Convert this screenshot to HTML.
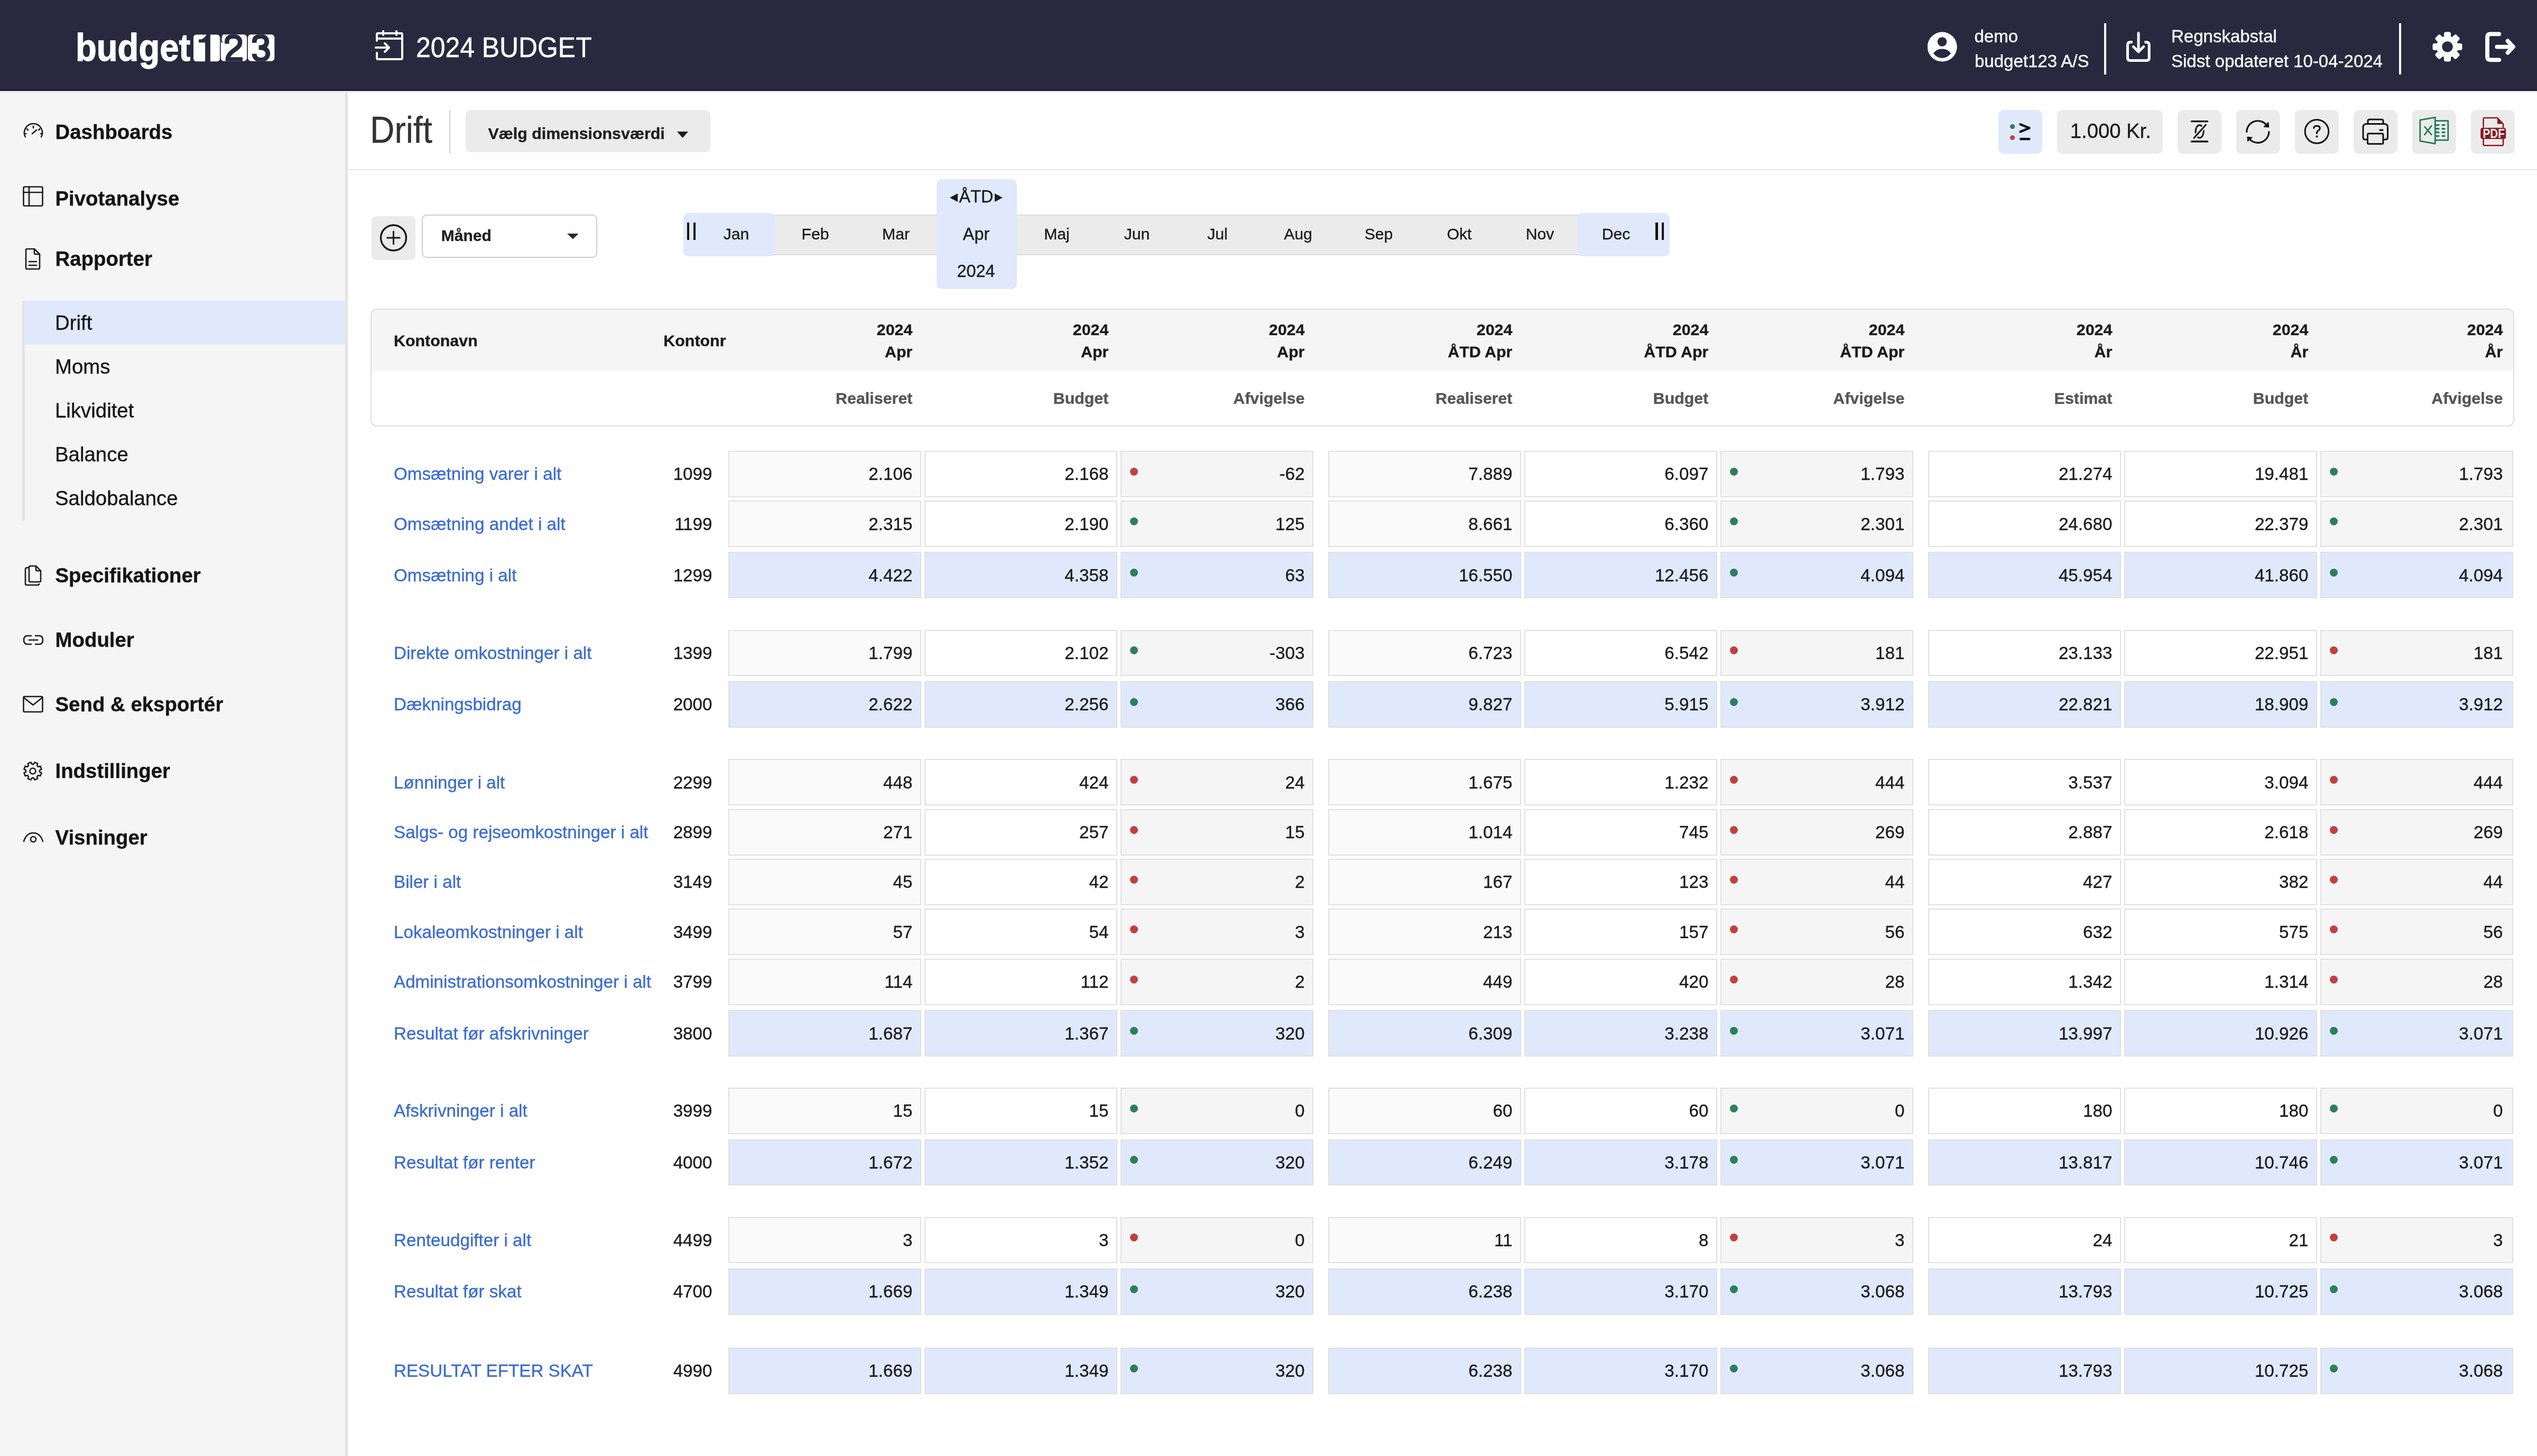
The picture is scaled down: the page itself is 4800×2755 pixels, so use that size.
<!DOCTYPE html>
<html><head><meta charset="utf-8"><title>Drift - budget123</title>
<style>
html,body{margin:0;padding:0;}
body{width:4800px;height:2755px;overflow:hidden;position:relative;background:#fff;font-family:"Liberation Sans", sans-serif;}
.t{position:absolute;white-space:nowrap;-webkit-text-stroke:0.35px currentColor;}
.r{position:absolute;}
</style></head><body><div id="w" style="position:absolute;left:0;top:0;width:4800px;height:2755px;will-change:transform;overflow:hidden">
<div class="r" style="left:0.00px;top:0.00px;width:4800.00px;height:170.00px;background:#2a283e"></div>
<div class="r" style="left:0.00px;top:170.00px;width:4800.00px;height:2.00px;background:#120f2c"></div>
<div class="r" style="left:0.00px;top:172.00px;width:4800.00px;height:3.00px;background:#e8e8e8"></div>
<div class="t" style="left:143.00px;top:53.70px;font-size:72.4px;line-height:72.4px;font-weight:700;color:#ffffff;transform:scaleX(0.9);transform-origin:0 0;-webkit-text-stroke:1.3px #fff">budget</div>
<svg class="r" style="left:365px;top:65px" width="160" height="53" viewBox="0 0 160 53">
<defs><clipPath id="c2"><rect x="52.7" y="0.3" width="49.5" height="50.5" rx="6"/></clipPath>
<clipPath id="c3"><rect x="104" y="0.3" width="50.3" height="50.5" rx="6"/></clipPath></defs>
<path d="M7 0.4 H25.8 Q21 8.5 15 9.4 H11.1 V15.5 H23.1 V51.3 H7 Q1 51.3 1 45.3 V6.4 Q1 0.4 7 0.4 Z" fill="#fff"/>
<path d="M32.9 0.4 H45 Q51 0.4 51 6.4 V45.3 Q51 51.3 45 51.3 H32.9 Z" fill="#fff"/>
<rect x="52.7" y="0.3" width="49.5" height="50.5" rx="6" fill="#fff"/>
<rect x="104" y="0.3" width="50.3" height="50.5" rx="6" fill="#fff"/>
<path clip-path="url(#c2)" d="M64.4 17.7 V13 C64.4 7 69.5 3.7 76.8 3.7 C84 3.7 89.2 8 89.2 15 C89.2 22 84 26 78 30 C71 34.5 65.8 40 65.8 47.5 H94" stroke="#2a283e" stroke-width="8.4" fill="none"/>
<path clip-path="url(#c2)" d="M56 0 Q52 6 55 16" stroke="#2a283e" stroke-width="2" fill="none"/>
<path clip-path="url(#c3)" d="M116.3 16 V13 C116.3 7 121 3.7 128.5 3.7 C135 3.7 139.7 7.5 139.7 14 C139.7 21 134 25 128 25 H124.7 M128 25 C135 25 141.7 29 141.7 36.5 C141.7 44 135.5 48.4 128.7 48.4 C121 48.4 116.1 43.5 116.1 36.7" stroke="#2a283e" stroke-width="8.8" fill="none"/>
</svg>
<svg class="r" style="left:708.00px;top:56.00px;" width="58" height="60" viewBox="0 0 58 60"><g stroke="#fff" stroke-width="4" fill="none" stroke-linecap="round" stroke-linejoin="round">
<path d="M5 21 V9 Q5 7 7 7 H51 Q53 7 53 9 V53 Q53 56 51 56 H7 Q5 56 5 53 V44"/>
<path d="M5 17 H53"/><path d="M17 3 V10"/><path d="M42 3 V10"/>
<path d="M3 34 H28"/><path d="M20 26 L28 34 L20 42"/></g></svg>
<div class="t" style="left:787.00px;top:63.15px;font-size:54.5px;line-height:54.5px;font-weight:400;color:#ffffff;transform:scaleX(0.915);transform-origin:0 0;-webkit-text-stroke:0.5px #fff">2024 BUDGET</div>
<svg class="r" style="left:3647.00px;top:60.00px;" width="57" height="58" viewBox="0 0 57 58"><circle cx="27.7" cy="28.6" r="28" fill="#fff"/>
<circle cx="27.5" cy="19" r="8.8" fill="#2a283e"/>
<path d="M10.8 41 Q17 32.6 27.5 32.6 Q38 32.6 44.2 41 Q37 49.9 27.5 49.9 Q18 49.9 10.8 41 Z" fill="#2a283e"/></svg>
<div class="t" style="left:3735.50px;top:52.06px;font-size:33px;line-height:33px;font-weight:400;color:#fff;">demo</div>
<div class="t" style="left:3736.00px;top:99.06px;font-size:33px;line-height:33px;font-weight:400;color:#fff;">budget123 A/S</div>
<div class="r" style="left:3981.00px;top:44.00px;width:3.50px;height:97.00px;background:#fff"></div>
<svg class="r" style="left:4020.00px;top:58.00px;" width="52" height="62" viewBox="0 0 52 62"><g stroke="#fff" stroke-width="5" fill="none" stroke-linejoin="round">
<path d="M14.8 21.8 H10.4 Q5.4 21.8 5.4 26.8 V51.5 Q5.4 56.5 10.4 56.5 H41.2 Q46.2 56.5 46.2 51.5 V26.8 Q46.2 21.8 41.2 21.8 H37.4"/>
<path d="M26 4.8 V38" stroke-linecap="round"/><path d="M16.3 30.3 L26 40 L35.7 30.3" stroke-linecap="round"/></g></svg>
<div class="t" style="left:4108.00px;top:52.06px;font-size:33px;line-height:33px;font-weight:400;color:#fff;">Regnskabstal</div>
<div class="t" style="left:4108.00px;top:99.06px;font-size:33px;line-height:33px;font-weight:400;color:#fff;">Sidst opdateret 10-04-2024</div>
<div class="r" style="left:4539.00px;top:44.00px;width:3.50px;height:97.00px;background:#fff"></div>
<svg class="r" style="left:4602.00px;top:60.30px;" width="57" height="57" viewBox="0 0 57 57"><circle cx="28.5" cy="28.5" r="20.5" fill="#fff"/><rect x="22" y="0.5" width="13" height="16" rx="3.5" fill="#fff" transform="rotate(0 28.5 28.5)"/><rect x="22" y="0.5" width="13" height="16" rx="3.5" fill="#fff" transform="rotate(45 28.5 28.5)"/><rect x="22" y="0.5" width="13" height="16" rx="3.5" fill="#fff" transform="rotate(90 28.5 28.5)"/><rect x="22" y="0.5" width="13" height="16" rx="3.5" fill="#fff" transform="rotate(135 28.5 28.5)"/><rect x="22" y="0.5" width="13" height="16" rx="3.5" fill="#fff" transform="rotate(180 28.5 28.5)"/><rect x="22" y="0.5" width="13" height="16" rx="3.5" fill="#fff" transform="rotate(225 28.5 28.5)"/><rect x="22" y="0.5" width="13" height="16" rx="3.5" fill="#fff" transform="rotate(270 28.5 28.5)"/><rect x="22" y="0.5" width="13" height="16" rx="3.5" fill="#fff" transform="rotate(315 28.5 28.5)"/><circle cx="28.5" cy="28.5" r="10.3" fill="#2a283e"/></svg>
<svg class="r" style="left:4700.00px;top:59.00px;" width="62" height="62" viewBox="0 0 62 62"><g stroke="#fff" stroke-width="7.8" fill="none" stroke-linecap="round" stroke-linejoin="round">
<path d="M28.3 5.4 H12 Q6 5.4 6 11.4 V48.3 Q6 54.3 12 54.3 H28.3"/><path d="M24.3 29.6 H54"/><path d="M44.5 18.5 L55 29.6 L44.5 40.7"/></g></svg>
<div class="r" style="left:0.00px;top:175.00px;width:653.00px;height:2580.00px;background:#f5f5f5"></div>
<div class="r" style="left:653.00px;top:175.00px;width:5.00px;height:2580.00px;background:#e4e4e4"></div>
<div class="t" style="left:104.50px;top:231.24px;font-size:38.4px;line-height:38.4px;font-weight:700;color:#141414;">Dashboards</div>
<div class="t" style="left:104.50px;top:357.49px;font-size:38.4px;line-height:38.4px;font-weight:700;color:#141414;">Pivotanalyse</div>
<div class="t" style="left:104.50px;top:471.24px;font-size:38.4px;line-height:38.4px;font-weight:700;color:#141414;">Rapporter</div>
<div class="t" style="left:104.50px;top:1069.99px;font-size:38.4px;line-height:38.4px;font-weight:700;color:#141414;">Specifikationer</div>
<div class="t" style="left:104.50px;top:1192.49px;font-size:38.4px;line-height:38.4px;font-weight:700;color:#141414;">Moduler</div>
<div class="t" style="left:104.50px;top:1313.74px;font-size:38.4px;line-height:38.4px;font-weight:700;color:#141414;">Send &amp; eksportér</div>
<div class="t" style="left:104.50px;top:1440.24px;font-size:38.4px;line-height:38.4px;font-weight:700;color:#141414;">Indstillinger</div>
<div class="t" style="left:104.50px;top:1566.49px;font-size:38.4px;line-height:38.4px;font-weight:700;color:#141414;">Visninger</div>
<div class="r" style="left:42.00px;top:569.00px;width:5.00px;height:416.00px;background:#e4e4e4"></div>
<div class="r" style="left:47.00px;top:569.00px;width:606.00px;height:83.00px;background:#dfe9fb"></div>
<div class="t" style="left:104.00px;top:592.19px;font-size:38.4px;line-height:38.4px;font-weight:400;color:#141414;">Drift</div>
<div class="t" style="left:104.00px;top:675.19px;font-size:38.4px;line-height:38.4px;font-weight:400;color:#141414;">Moms</div>
<div class="t" style="left:104.00px;top:758.19px;font-size:38.4px;line-height:38.4px;font-weight:400;color:#141414;">Likviditet</div>
<div class="t" style="left:104.00px;top:841.19px;font-size:38.4px;line-height:38.4px;font-weight:400;color:#141414;">Balance</div>
<div class="t" style="left:104.00px;top:924.19px;font-size:38.4px;line-height:38.4px;font-weight:400;color:#141414;">Saldobalance</div>
<svg class="r" style="left:42.00px;top:229.00px;" width="42" height="33" viewBox="0 0 42 33"><g stroke="#1c1c1c" stroke-width="2.6" fill="none" stroke-linecap="round" stroke-linejoin="round"><path d="M6 30 A17 17 0 1 1 36 30"/>
<path d="M21 13 V10"/><path d="M11 17 L9 15"/><path d="M31 17 L33 15"/><path d="M7 24 H5"/><path d="M35 24 H37"/>
<path d="M19 24 L27 17"/></g></svg>
<svg class="r" style="left:42.00px;top:351.00px;" width="42" height="42" viewBox="0 0 42 42"><g stroke="#1c1c1c" stroke-width="2.6" fill="none" stroke-linecap="round" stroke-linejoin="round"><rect x="2.5" y="2.5" width="36" height="36" rx="2"/><path d="M2.5 13 H38.5"/><path d="M13 2.5 V38.5"/></g></svg>
<svg class="r" style="left:44.00px;top:469.00px;" width="36" height="42" viewBox="0 0 36 42"><g stroke="#1c1c1c" stroke-width="2.6" fill="none" stroke-linecap="round" stroke-linejoin="round"><path d="M5 4 Q5 2 7 2 H21 L31 12 V38 Q31 40 29 40 H7 Q5 40 5 38 Z"/><path d="M21 2 V10 Q21 12 23 12 H31"/><path d="M11 26 H25"/><path d="M11 33 H25"/></g></svg>
<svg class="r" style="left:45.00px;top:1068.00px;" width="36" height="42" viewBox="0 0 36 42"><g stroke="#1c1c1c" stroke-width="2.6" fill="none" stroke-linecap="round" stroke-linejoin="round"><path d="M9 6 H7 Q3 6 3 10 V36 Q3 39 6 39 H26 Q29 39 29 37"/><path d="M10 5 Q10 3 12 3 H23 L32 12 V31 Q32 33 30 33 H12 Q10 33 10 31 Z"/><path d="M23 3 V10 Q23 12 25 12 H32"/></g></svg>
<svg class="r" style="left:42.00px;top:1199.00px;" width="42" height="24" viewBox="0 0 42 24"><g stroke="#1c1c1c" stroke-width="2.6" fill="none" stroke-linecap="round" stroke-linejoin="round"><path d="M17 4 H10 Q3 4 3 12 Q3 20 10 20 H17"/><path d="M25 4 H32 Q39 4 39 12 Q39 20 32 20 H25"/><path d="M13 12 H29"/></g></svg>
<svg class="r" style="left:42.00px;top:1315.00px;" width="42" height="35" viewBox="0 0 42 35"><g stroke="#1c1c1c" stroke-width="2.6" fill="none" stroke-linecap="round" stroke-linejoin="round"><rect x="2.5" y="3" width="36" height="29" rx="2"/><path d="M3 5 L20.5 19 L38 5"/></g></svg>
<svg class="r" style="left:42.00px;top:1439.00px;" width="40" height="40" viewBox="0 0 40 40"><g stroke="#1c1c1c" stroke-width="2.6" fill="none" stroke-linecap="round" stroke-linejoin="round"><path d="M32.92,21.46 L36.62,23.59 L34.29,29.21 L30.17,28.10 L28.10,30.17 L29.21,34.29 L23.59,36.62 L21.46,32.92 L18.54,32.92 L16.41,36.62 L10.79,34.29 L11.90,30.17 L9.83,28.10 L5.71,29.21 L3.38,23.59 L7.08,21.46 L7.08,18.54 L3.38,16.41 L5.71,10.79 L9.83,11.90 L11.90,9.83 L10.79,5.71 L16.41,3.38 L18.54,7.08 L21.46,7.08 L23.59,3.38 L29.21,5.71 L28.10,9.83 L30.17,11.90 L34.29,10.79 L36.62,16.41 L32.92,18.54 Z"/><circle cx="20" cy="20" r="5.5"/></g></svg>
<svg class="r" style="left:42.00px;top:1570.00px;" width="42" height="28" viewBox="0 0 42 28"><g stroke="#1c1c1c" stroke-width="2.6" fill="none" stroke-linecap="round" stroke-linejoin="round"><path d="M3 22 Q8 6 21 6 Q34 6 39 22"/><circle cx="21" cy="18" r="5"/></g></svg>
<div class="t" style="left:700.00px;top:210.38px;font-size:71px;line-height:71px;font-weight:400;color:#333;transform:scaleX(0.905);transform-origin:0 0">Drift</div>
<div class="r" style="left:850.00px;top:208.00px;width:2.40px;height:82.00px;background:#cfcfcf"></div>
<div class="r" style="left:881.00px;top:208.00px;width:463.00px;height:80.00px;background:#ebebeb;border-radius:10px"></div>
<div class="t" style="left:923.40px;top:237.36px;font-size:30.4px;line-height:30.4px;font-weight:700;color:#1f1f1f;">Vælg dimensionsværdi</div>
<svg class="r" style="left:1281.00px;top:249.00px;" width="21" height="12" viewBox="0 0 21 12"><path d="M0 0 H21 L10.5 12 Z" fill="#1f1f1f"/></svg>
<div class="r" style="left:658.00px;top:319.50px;width:4142.00px;height:2.40px;background:#e6e6e6"></div>
<div class="r" style="left:3781.00px;top:208.25px;width:83.00px;height:83.00px;background:#dfe9fb;border-radius:10px"></div>
<div class="r" style="left:4119.50px;top:208.25px;width:83.00px;height:83.00px;background:#ebebeb;border-radius:10px"></div>
<div class="r" style="left:4231.00px;top:208.25px;width:83.00px;height:83.00px;background:#ebebeb;border-radius:10px"></div>
<div class="r" style="left:4342.00px;top:208.25px;width:83.00px;height:83.00px;background:#ebebeb;border-radius:10px"></div>
<div class="r" style="left:4453.00px;top:208.25px;width:83.00px;height:83.00px;background:#ebebeb;border-radius:10px"></div>
<div class="r" style="left:4564.00px;top:208.25px;width:83.00px;height:83.00px;background:#ebebeb;border-radius:10px"></div>
<div class="r" style="left:4675.25px;top:208.25px;width:83.00px;height:83.00px;background:#ebebeb;border-radius:10px"></div>
<div class="r" style="left:3892.00px;top:208.25px;width:200.00px;height:83.00px;background:#ebebeb;border-radius:10px"></div>
<div class="t" style="left:3916.75px;top:229.36px;font-size:38.25px;line-height:38.25px;font-weight:400;color:#1a1a1a;">1.000 Kr.</div>
<svg class="r" style="left:3781.00px;top:208.25px;" width="83" height="83" viewBox="0 0 83 83"><circle cx="26.5" cy="31.5" r="4.6" fill="#2e7d5b"/><circle cx="26.5" cy="52.5" r="4.6" fill="#c0403f"/>
<path d="M41.5 27.3 L58.5 34.2 L41.5 41.3" stroke="#111" stroke-width="4.3" fill="none" stroke-linejoin="round" stroke-linecap="round"/>
<path d="M42 55 H58.5" stroke="#111" stroke-width="4.3" stroke-linecap="round"/></svg>
<svg class="r" style="left:4119.50px;top:208.25px;" width="83" height="83" viewBox="0 0 83 83"><g fill="none" stroke-linecap="round">
<path d="M26.5 21.6 H56.5 M26.5 59.7 H56.5" stroke="#111" stroke-width="3.4"/>
<ellipse cx="41.6" cy="40.8" rx="7.6" ry="12" stroke="#111" stroke-width="3"/>
<path d="M31.1 53.1 L53.4 28.2" stroke="#ebebeb" stroke-width="7"/>
<path d="M31.1 53.1 L53.4 28.2" stroke="#111" stroke-width="3"/></g></svg>
<svg class="r" style="left:4231.00px;top:208.25px;" width="83" height="83" viewBox="0 0 83 83"><g stroke="#111" stroke-width="3.2" fill="none" stroke-linecap="round">
<path d="M19.7 41.5 A21.1 21.1 0 0 1 56.5 27.8"/><path d="M61.9 41.5 A21.1 21.1 0 0 1 25.5 55.5"/></g>
<path d="M52.3 31.8 L61.6 32.6 L60.7 23.5 Z" fill="#111" stroke="#111" stroke-width="1.2" stroke-linejoin="round"/>
<path d="M30.2 52 L21 51.2 L21.6 59.3 Z" fill="#111" stroke="#111" stroke-width="1.2" stroke-linejoin="round"/></svg>
<svg class="r" style="left:4342.00px;top:208.25px;" width="83" height="83" viewBox="0 0 83 83"><circle cx="41.4" cy="40.8" r="22.3" stroke="#111" stroke-width="3" fill="none"/>
<path d="M35.8 34.2 Q36.3 30.2 41.5 30.2 Q47.2 30.2 47.2 34.6 Q47.2 37.6 43.6 39.6 Q41.4 41 41.4 44.3" stroke="#111" stroke-width="3.1" fill="none" stroke-linecap="round"/>
<circle cx="41.4" cy="50.3" r="2.1" fill="#111"/></svg>
<svg class="r" style="left:4453.00px;top:208.25px;" width="83" height="83" viewBox="0 0 83 83"><g stroke="#111" stroke-width="3" fill="none" stroke-linejoin="round">
<path d="M27 26.5 V21 Q27 18 30 18 H53 Q56 18 56 21 V26.5"/>
<path d="M26.5 55.9 H22 Q18 55.9 18 51.9 V33 Q18 26.5 24.5 26.5 H58 Q64.5 26.5 64.5 33 V51.9 Q64.5 55.9 60.5 55.9 H56"/>
<rect x="26.5" y="44.7" width="29.4" height="19.5" rx="2"/>
<path d="M50 38.1 H55" stroke-width="3.2" stroke-linecap="round"/></g></svg>
<svg class="r" style="left:4564.25px;top:208.25px;" width="83" height="83" viewBox="0 0 83 83"><g stroke="#1f7a56" stroke-width="2.8" fill="none" stroke-linejoin="round" stroke-linecap="round">
<path d="M14.8 19.1 L43.3 14.1 V63.8 L14.8 58.8 Z"/><path d="M43.3 20.7 H67.8 V57.1 H43.3"/>
<path d="M23.5 31.9 L36.3 46.8 M36.3 30.2 L23.5 46.8"/>
<path d="M45.5 28.6 H50 M57 28.6 H61 M45.5 35.6 H50 M57 35.6 H61 M45.5 42.4 H50 M57 42.4 H61 M45.5 49.3 H50 M57 49.3 H61" stroke-width="3.3"/></g></svg>
<svg class="r" style="left:4679.60px;top:208.25px;" width="83" height="83" viewBox="0 0 83 83"><path d="M18.6 33.8 V17 Q18.6 14.9 20.7 14.9 H44.9 L56 26.5 V33.8 M18.6 54.9 V65.2 Q18.6 67.3 20.7 67.3 H54 Q56 67.3 56 65.2 V54.9" stroke="#8a1a26" stroke-width="2.5" fill="none" stroke-linejoin="round"/>
<path d="M44.9 14.2 L56.7 26.5 H44.9 Z" fill="#8a1a26"/>
<rect x="13.2" y="33.8" width="48" height="21.1" rx="4" fill="#8a1a26"/>
<text x="17.4" y="52.8" font-family="Liberation Sans" font-weight="700" font-size="23.5" fill="#f4f4f4" textLength="41.4" lengthAdjust="spacingAndGlyphs">PDF</text></svg>
<div class="r" style="left:703.00px;top:408.50px;width:83.00px;height:83.00px;background:#ebebeb;border-radius:9px"></div>
<svg class="r" style="left:703.00px;top:408.50px;" width="83" height="83" viewBox="0 0 83 83"><circle cx="41.5" cy="41" r="24" stroke="#1a1a1a" stroke-width="3.4" fill="none"/>
<path d="M41.5 28 V54 M28.5 41 H54.5" stroke="#1a1a1a" stroke-width="3"/></svg>
<div class="r" style="left:798.00px;top:406.00px;width:332.00px;height:82.00px;background:#fff;border:2.4px solid #cdcdcd;border-radius:9px;box-sizing:border-box"></div>
<div class="t" style="left:834.80px;top:431.00px;font-size:30px;line-height:30px;font-weight:700;color:#1f1f1f;">Måned</div>
<svg class="r" style="left:1072.50px;top:441.60px;" width="21.7" height="10.5" viewBox="0 0 21.7 10.5"><path d="M0 0 H21.7 L10.85 10.5 Z" fill="#2a2a2a"/></svg>
<div class="r" style="left:1320.00px;top:406.00px;width:1820.00px;height:76.50px;background:#ebebeb;border-top:2px solid #dcdcdc;border-bottom:2px solid #dcdcdc;box-sizing:border-box"></div>
<div class="r" style="left:1292.50px;top:403.00px;width:174.00px;height:82.00px;background:#dfe9fb;border-radius:10px"></div>
<div class="r" style="left:2984.00px;top:403.00px;width:174.50px;height:82.00px;background:#dfe9fb;border-radius:10px"></div>
<div class="r" style="left:1771.50px;top:339.00px;width:152.00px;height:207.50px;background:#dfe9fb;border-radius:10px"></div>
<div class="r" style="left:1300.10px;top:421.10px;width:4.20px;height:32.80px;background:#111"></div>
<div class="r" style="left:1311.80px;top:421.10px;width:4.40px;height:32.80px;background:#111"></div>
<div class="r" style="left:3132.20px;top:421.10px;width:4.40px;height:32.80px;background:#111"></div>
<div class="r" style="left:3144.00px;top:421.10px;width:4.40px;height:32.80px;background:#111"></div>
<div class="t" style="left:393.00px;width:2000px;text-align:center;top:428.43px;font-size:30.2px;line-height:30.2px;font-weight:400;color:#1a1a1a;">Jan</div>
<div class="t" style="left:542.50px;width:2000px;text-align:center;top:428.43px;font-size:30.2px;line-height:30.2px;font-weight:400;color:#1a1a1a;">Feb</div>
<div class="t" style="left:695.00px;width:2000px;text-align:center;top:428.43px;font-size:30.2px;line-height:30.2px;font-weight:400;color:#1a1a1a;">Mar</div>
<div class="t" style="left:847.00px;width:2000px;text-align:center;top:426.57px;font-size:32.4px;line-height:32.4px;font-weight:400;color:#1a1a1a;">Apr</div>
<div class="t" style="left:999.50px;width:2000px;text-align:center;top:428.43px;font-size:30.2px;line-height:30.2px;font-weight:400;color:#1a1a1a;">Maj</div>
<div class="t" style="left:1151.00px;width:2000px;text-align:center;top:428.43px;font-size:30.2px;line-height:30.2px;font-weight:400;color:#1a1a1a;">Jun</div>
<div class="t" style="left:1303.50px;width:2000px;text-align:center;top:428.43px;font-size:30.2px;line-height:30.2px;font-weight:400;color:#1a1a1a;">Jul</div>
<div class="t" style="left:1456.00px;width:2000px;text-align:center;top:428.43px;font-size:30.2px;line-height:30.2px;font-weight:400;color:#1a1a1a;">Aug</div>
<div class="t" style="left:1608.50px;width:2000px;text-align:center;top:428.43px;font-size:30.2px;line-height:30.2px;font-weight:400;color:#1a1a1a;">Sep</div>
<div class="t" style="left:1761.00px;width:2000px;text-align:center;top:428.43px;font-size:30.2px;line-height:30.2px;font-weight:400;color:#1a1a1a;">Okt</div>
<div class="t" style="left:1913.50px;width:2000px;text-align:center;top:428.43px;font-size:30.2px;line-height:30.2px;font-weight:400;color:#1a1a1a;">Nov</div>
<div class="t" style="left:2057.50px;width:2000px;text-align:center;top:428.43px;font-size:30.2px;line-height:30.2px;font-weight:400;color:#1a1a1a;">Dec</div>
<div class="t" style="left:847.00px;width:2000px;text-align:center;top:356.27px;font-size:32.4px;line-height:32.4px;font-weight:400;color:#1a1a1a;">ÅTD</div>
<svg class="r" style="left:1797.00px;top:365.50px;" width="15" height="16" viewBox="0 0 15 16"><path d="M0 8 L15 0 V16 Z" fill="#1a1a1a"/></svg>
<svg class="r" style="left:1882.00px;top:365.50px;" width="15" height="16" viewBox="0 0 15 16"><path d="M15 8 L0 0 V16 Z" fill="#1a1a1a"/></svg>
<div class="t" style="left:846.50px;width:2000px;text-align:center;top:496.87px;font-size:32.4px;line-height:32.4px;font-weight:400;color:#1a1a1a;">2024</div>
<div class="r" style="left:701.00px;top:584.00px;width:4056.00px;height:222.50px;background:#fff;border:2.4px solid #dedede;border-radius:12px;box-sizing:border-box"></div>
<div class="r" style="left:703.40px;top:586.40px;width:4051.20px;height:116.00px;background:#f5f5f5;border-radius:10px 10px 0 0"></div>
<div class="t" style="left:745.00px;top:629.26px;font-size:30.4px;line-height:30.4px;font-weight:700;color:#1a1a1a;">Kontonavn</div>
<div class="t" style="left:-626.50px;width:2000px;text-align:right;top:629.26px;font-size:30.4px;line-height:30.4px;font-weight:700;color:#1a1a1a;">Kontonr</div>
<div class="t" style="left:-273.60px;width:2000px;text-align:right;top:607.76px;font-size:30.4px;line-height:30.4px;font-weight:700;color:#1a1a1a;">2024</div>
<div class="t" style="left:-273.60px;width:2000px;text-align:right;top:650.26px;font-size:30.4px;line-height:30.4px;font-weight:700;color:#1a1a1a;">Apr</div>
<div class="t" style="left:-273.60px;width:2000px;text-align:right;top:737.76px;font-size:30.4px;line-height:30.4px;font-weight:700;color:#555;">Realiseret</div>
<div class="t" style="left:97.40px;width:2000px;text-align:right;top:607.76px;font-size:30.4px;line-height:30.4px;font-weight:700;color:#1a1a1a;">2024</div>
<div class="t" style="left:97.40px;width:2000px;text-align:right;top:650.26px;font-size:30.4px;line-height:30.4px;font-weight:700;color:#1a1a1a;">Apr</div>
<div class="t" style="left:97.40px;width:2000px;text-align:right;top:737.76px;font-size:30.4px;line-height:30.4px;font-weight:700;color:#555;">Budget</div>
<div class="t" style="left:468.40px;width:2000px;text-align:right;top:607.76px;font-size:30.4px;line-height:30.4px;font-weight:700;color:#1a1a1a;">2024</div>
<div class="t" style="left:468.40px;width:2000px;text-align:right;top:650.26px;font-size:30.4px;line-height:30.4px;font-weight:700;color:#1a1a1a;">Apr</div>
<div class="t" style="left:468.40px;width:2000px;text-align:right;top:737.76px;font-size:30.4px;line-height:30.4px;font-weight:700;color:#555;">Afvigelse</div>
<div class="t" style="left:861.40px;width:2000px;text-align:right;top:607.76px;font-size:30.4px;line-height:30.4px;font-weight:700;color:#1a1a1a;">2024</div>
<div class="t" style="left:861.40px;width:2000px;text-align:right;top:650.26px;font-size:30.4px;line-height:30.4px;font-weight:700;color:#1a1a1a;">ÅTD Apr</div>
<div class="t" style="left:861.40px;width:2000px;text-align:right;top:737.76px;font-size:30.4px;line-height:30.4px;font-weight:700;color:#555;">Realiseret</div>
<div class="t" style="left:1232.40px;width:2000px;text-align:right;top:607.76px;font-size:30.4px;line-height:30.4px;font-weight:700;color:#1a1a1a;">2024</div>
<div class="t" style="left:1232.40px;width:2000px;text-align:right;top:650.26px;font-size:30.4px;line-height:30.4px;font-weight:700;color:#1a1a1a;">ÅTD Apr</div>
<div class="t" style="left:1232.40px;width:2000px;text-align:right;top:737.76px;font-size:30.4px;line-height:30.4px;font-weight:700;color:#555;">Budget</div>
<div class="t" style="left:1603.40px;width:2000px;text-align:right;top:607.76px;font-size:30.4px;line-height:30.4px;font-weight:700;color:#1a1a1a;">2024</div>
<div class="t" style="left:1603.40px;width:2000px;text-align:right;top:650.26px;font-size:30.4px;line-height:30.4px;font-weight:700;color:#1a1a1a;">ÅTD Apr</div>
<div class="t" style="left:1603.40px;width:2000px;text-align:right;top:737.76px;font-size:30.4px;line-height:30.4px;font-weight:700;color:#555;">Afvigelse</div>
<div class="t" style="left:1996.40px;width:2000px;text-align:right;top:607.76px;font-size:30.4px;line-height:30.4px;font-weight:700;color:#1a1a1a;">2024</div>
<div class="t" style="left:1996.40px;width:2000px;text-align:right;top:650.26px;font-size:30.4px;line-height:30.4px;font-weight:700;color:#1a1a1a;">År</div>
<div class="t" style="left:1996.40px;width:2000px;text-align:right;top:737.76px;font-size:30.4px;line-height:30.4px;font-weight:700;color:#555;">Estimat</div>
<div class="t" style="left:2367.40px;width:2000px;text-align:right;top:607.76px;font-size:30.4px;line-height:30.4px;font-weight:700;color:#1a1a1a;">2024</div>
<div class="t" style="left:2367.40px;width:2000px;text-align:right;top:650.26px;font-size:30.4px;line-height:30.4px;font-weight:700;color:#1a1a1a;">År</div>
<div class="t" style="left:2367.40px;width:2000px;text-align:right;top:737.76px;font-size:30.4px;line-height:30.4px;font-weight:700;color:#555;">Budget</div>
<div class="t" style="left:2735.40px;width:2000px;text-align:right;top:607.76px;font-size:30.4px;line-height:30.4px;font-weight:700;color:#1a1a1a;">2024</div>
<div class="t" style="left:2735.40px;width:2000px;text-align:right;top:650.26px;font-size:30.4px;line-height:30.4px;font-weight:700;color:#1a1a1a;">År</div>
<div class="t" style="left:2735.40px;width:2000px;text-align:right;top:737.76px;font-size:30.4px;line-height:30.4px;font-weight:700;color:#555;">Afvigelse</div>
<div class="t" style="left:745.00px;top:880.39px;font-size:33.2px;line-height:33.2px;font-weight:400;color:#3b6bd0;">Omsætning varer i alt</div>
<div class="t" style="left:-652.50px;width:2000px;text-align:right;top:880.39px;font-size:33.2px;line-height:33.2px;font-weight:400;color:#1a1a1a;">1099</div>
<div class="r" style="left:1377.90px;top:853.00px;width:365.00px;height:87.75px;background:#fafafa;border:2.4px solid #e0e0e0;box-sizing:border-box"></div>
<div class="t" style="left:-273.60px;width:2000px;text-align:right;top:880.39px;font-size:33.2px;line-height:33.2px;font-weight:400;color:#1a1a1a;">2.106</div>
<div class="r" style="left:1748.90px;top:853.00px;width:365.00px;height:87.75px;background:#ffffff;border:2.4px solid #e0e0e0;box-sizing:border-box"></div>
<div class="t" style="left:97.40px;width:2000px;text-align:right;top:880.39px;font-size:33.2px;line-height:33.2px;font-weight:400;color:#1a1a1a;">2.168</div>
<div class="r" style="left:2119.90px;top:853.00px;width:365.00px;height:87.75px;background:#f5f5f5;border:2.4px solid #e0e0e0;box-sizing:border-box"></div>
<div class="r" style="left:2137.70px;top:884.90px;width:15.00px;height:15.00px;background:#c0403f;border-radius:50%"></div>
<div class="t" style="left:468.40px;width:2000px;text-align:right;top:880.39px;font-size:33.2px;line-height:33.2px;font-weight:400;color:#1a1a1a;">-62</div>
<div class="r" style="left:2512.90px;top:853.00px;width:365.00px;height:87.75px;background:#fafafa;border:2.4px solid #e0e0e0;box-sizing:border-box"></div>
<div class="t" style="left:861.40px;width:2000px;text-align:right;top:880.39px;font-size:33.2px;line-height:33.2px;font-weight:400;color:#1a1a1a;">7.889</div>
<div class="r" style="left:2883.90px;top:853.00px;width:365.00px;height:87.75px;background:#ffffff;border:2.4px solid #e0e0e0;box-sizing:border-box"></div>
<div class="t" style="left:1232.40px;width:2000px;text-align:right;top:880.39px;font-size:33.2px;line-height:33.2px;font-weight:400;color:#1a1a1a;">6.097</div>
<div class="r" style="left:3254.90px;top:853.00px;width:365.00px;height:87.75px;background:#f5f5f5;border:2.4px solid #e0e0e0;box-sizing:border-box"></div>
<div class="r" style="left:3272.70px;top:884.90px;width:15.00px;height:15.00px;background:#2e7d5b;border-radius:50%"></div>
<div class="t" style="left:1603.40px;width:2000px;text-align:right;top:880.39px;font-size:33.2px;line-height:33.2px;font-weight:400;color:#1a1a1a;">1.793</div>
<div class="r" style="left:3647.90px;top:853.00px;width:365.00px;height:87.75px;background:#ffffff;border:2.4px solid #e0e0e0;box-sizing:border-box"></div>
<div class="t" style="left:1996.40px;width:2000px;text-align:right;top:880.39px;font-size:33.2px;line-height:33.2px;font-weight:400;color:#1a1a1a;">21.274</div>
<div class="r" style="left:4018.90px;top:853.00px;width:365.00px;height:87.75px;background:#ffffff;border:2.4px solid #e0e0e0;box-sizing:border-box"></div>
<div class="t" style="left:2367.40px;width:2000px;text-align:right;top:880.39px;font-size:33.2px;line-height:33.2px;font-weight:400;color:#1a1a1a;">19.481</div>
<div class="r" style="left:4389.90px;top:853.00px;width:365.00px;height:87.75px;background:#f5f5f5;border:2.4px solid #e0e0e0;box-sizing:border-box"></div>
<div class="r" style="left:4407.70px;top:884.90px;width:15.00px;height:15.00px;background:#2e7d5b;border-radius:50%"></div>
<div class="t" style="left:2735.40px;width:2000px;text-align:right;top:880.39px;font-size:33.2px;line-height:33.2px;font-weight:400;color:#1a1a1a;">1.793</div>
<div class="t" style="left:745.00px;top:974.64px;font-size:33.2px;line-height:33.2px;font-weight:400;color:#3b6bd0;">Omsætning andet i alt</div>
<div class="t" style="left:-652.50px;width:2000px;text-align:right;top:974.64px;font-size:33.2px;line-height:33.2px;font-weight:400;color:#1a1a1a;">1199</div>
<div class="r" style="left:1377.90px;top:947.25px;width:365.00px;height:87.75px;background:#fafafa;border:2.4px solid #e0e0e0;box-sizing:border-box"></div>
<div class="t" style="left:-273.60px;width:2000px;text-align:right;top:974.64px;font-size:33.2px;line-height:33.2px;font-weight:400;color:#1a1a1a;">2.315</div>
<div class="r" style="left:1748.90px;top:947.25px;width:365.00px;height:87.75px;background:#ffffff;border:2.4px solid #e0e0e0;box-sizing:border-box"></div>
<div class="t" style="left:97.40px;width:2000px;text-align:right;top:974.64px;font-size:33.2px;line-height:33.2px;font-weight:400;color:#1a1a1a;">2.190</div>
<div class="r" style="left:2119.90px;top:947.25px;width:365.00px;height:87.75px;background:#f5f5f5;border:2.4px solid #e0e0e0;box-sizing:border-box"></div>
<div class="r" style="left:2137.70px;top:979.15px;width:15.00px;height:15.00px;background:#2e7d5b;border-radius:50%"></div>
<div class="t" style="left:468.40px;width:2000px;text-align:right;top:974.64px;font-size:33.2px;line-height:33.2px;font-weight:400;color:#1a1a1a;">125</div>
<div class="r" style="left:2512.90px;top:947.25px;width:365.00px;height:87.75px;background:#fafafa;border:2.4px solid #e0e0e0;box-sizing:border-box"></div>
<div class="t" style="left:861.40px;width:2000px;text-align:right;top:974.64px;font-size:33.2px;line-height:33.2px;font-weight:400;color:#1a1a1a;">8.661</div>
<div class="r" style="left:2883.90px;top:947.25px;width:365.00px;height:87.75px;background:#ffffff;border:2.4px solid #e0e0e0;box-sizing:border-box"></div>
<div class="t" style="left:1232.40px;width:2000px;text-align:right;top:974.64px;font-size:33.2px;line-height:33.2px;font-weight:400;color:#1a1a1a;">6.360</div>
<div class="r" style="left:3254.90px;top:947.25px;width:365.00px;height:87.75px;background:#f5f5f5;border:2.4px solid #e0e0e0;box-sizing:border-box"></div>
<div class="r" style="left:3272.70px;top:979.15px;width:15.00px;height:15.00px;background:#2e7d5b;border-radius:50%"></div>
<div class="t" style="left:1603.40px;width:2000px;text-align:right;top:974.64px;font-size:33.2px;line-height:33.2px;font-weight:400;color:#1a1a1a;">2.301</div>
<div class="r" style="left:3647.90px;top:947.25px;width:365.00px;height:87.75px;background:#ffffff;border:2.4px solid #e0e0e0;box-sizing:border-box"></div>
<div class="t" style="left:1996.40px;width:2000px;text-align:right;top:974.64px;font-size:33.2px;line-height:33.2px;font-weight:400;color:#1a1a1a;">24.680</div>
<div class="r" style="left:4018.90px;top:947.25px;width:365.00px;height:87.75px;background:#ffffff;border:2.4px solid #e0e0e0;box-sizing:border-box"></div>
<div class="t" style="left:2367.40px;width:2000px;text-align:right;top:974.64px;font-size:33.2px;line-height:33.2px;font-weight:400;color:#1a1a1a;">22.379</div>
<div class="r" style="left:4389.90px;top:947.25px;width:365.00px;height:87.75px;background:#f5f5f5;border:2.4px solid #e0e0e0;box-sizing:border-box"></div>
<div class="r" style="left:4407.70px;top:979.15px;width:15.00px;height:15.00px;background:#2e7d5b;border-radius:50%"></div>
<div class="t" style="left:2735.40px;width:2000px;text-align:right;top:974.64px;font-size:33.2px;line-height:33.2px;font-weight:400;color:#1a1a1a;">2.301</div>
<div class="t" style="left:745.00px;top:1071.64px;font-size:33.2px;line-height:33.2px;font-weight:400;color:#3b6bd0;">Omsætning i alt</div>
<div class="t" style="left:-652.50px;width:2000px;text-align:right;top:1071.64px;font-size:33.2px;line-height:33.2px;font-weight:400;color:#1a1a1a;">1299</div>
<div class="r" style="left:1377.90px;top:1044.25px;width:365.00px;height:87.75px;background:#dfe9fb;border:2.4px solid #e0e0e0;box-sizing:border-box"></div>
<div class="t" style="left:-273.60px;width:2000px;text-align:right;top:1071.64px;font-size:33.2px;line-height:33.2px;font-weight:400;color:#1a1a1a;">4.422</div>
<div class="r" style="left:1748.90px;top:1044.25px;width:365.00px;height:87.75px;background:#dfe9fb;border:2.4px solid #e0e0e0;box-sizing:border-box"></div>
<div class="t" style="left:97.40px;width:2000px;text-align:right;top:1071.64px;font-size:33.2px;line-height:33.2px;font-weight:400;color:#1a1a1a;">4.358</div>
<div class="r" style="left:2119.90px;top:1044.25px;width:365.00px;height:87.75px;background:#dfe9fb;border:2.4px solid #e0e0e0;box-sizing:border-box"></div>
<div class="r" style="left:2137.70px;top:1076.15px;width:15.00px;height:15.00px;background:#2e7d5b;border-radius:50%"></div>
<div class="t" style="left:468.40px;width:2000px;text-align:right;top:1071.64px;font-size:33.2px;line-height:33.2px;font-weight:400;color:#1a1a1a;">63</div>
<div class="r" style="left:2512.90px;top:1044.25px;width:365.00px;height:87.75px;background:#dfe9fb;border:2.4px solid #e0e0e0;box-sizing:border-box"></div>
<div class="t" style="left:861.40px;width:2000px;text-align:right;top:1071.64px;font-size:33.2px;line-height:33.2px;font-weight:400;color:#1a1a1a;">16.550</div>
<div class="r" style="left:2883.90px;top:1044.25px;width:365.00px;height:87.75px;background:#dfe9fb;border:2.4px solid #e0e0e0;box-sizing:border-box"></div>
<div class="t" style="left:1232.40px;width:2000px;text-align:right;top:1071.64px;font-size:33.2px;line-height:33.2px;font-weight:400;color:#1a1a1a;">12.456</div>
<div class="r" style="left:3254.90px;top:1044.25px;width:365.00px;height:87.75px;background:#dfe9fb;border:2.4px solid #e0e0e0;box-sizing:border-box"></div>
<div class="r" style="left:3272.70px;top:1076.15px;width:15.00px;height:15.00px;background:#2e7d5b;border-radius:50%"></div>
<div class="t" style="left:1603.40px;width:2000px;text-align:right;top:1071.64px;font-size:33.2px;line-height:33.2px;font-weight:400;color:#1a1a1a;">4.094</div>
<div class="r" style="left:3647.90px;top:1044.25px;width:365.00px;height:87.75px;background:#dfe9fb;border:2.4px solid #e0e0e0;box-sizing:border-box"></div>
<div class="t" style="left:1996.40px;width:2000px;text-align:right;top:1071.64px;font-size:33.2px;line-height:33.2px;font-weight:400;color:#1a1a1a;">45.954</div>
<div class="r" style="left:4018.90px;top:1044.25px;width:365.00px;height:87.75px;background:#dfe9fb;border:2.4px solid #e0e0e0;box-sizing:border-box"></div>
<div class="t" style="left:2367.40px;width:2000px;text-align:right;top:1071.64px;font-size:33.2px;line-height:33.2px;font-weight:400;color:#1a1a1a;">41.860</div>
<div class="r" style="left:4389.90px;top:1044.25px;width:365.00px;height:87.75px;background:#dfe9fb;border:2.4px solid #e0e0e0;box-sizing:border-box"></div>
<div class="r" style="left:4407.70px;top:1076.15px;width:15.00px;height:15.00px;background:#2e7d5b;border-radius:50%"></div>
<div class="t" style="left:2735.40px;width:2000px;text-align:right;top:1071.64px;font-size:33.2px;line-height:33.2px;font-weight:400;color:#1a1a1a;">4.094</div>
<div class="t" style="left:745.00px;top:1218.89px;font-size:33.2px;line-height:33.2px;font-weight:400;color:#3b6bd0;">Direkte omkostninger i alt</div>
<div class="t" style="left:-652.50px;width:2000px;text-align:right;top:1218.89px;font-size:33.2px;line-height:33.2px;font-weight:400;color:#1a1a1a;">1399</div>
<div class="r" style="left:1377.90px;top:1191.50px;width:365.00px;height:87.75px;background:#fafafa;border:2.4px solid #e0e0e0;box-sizing:border-box"></div>
<div class="t" style="left:-273.60px;width:2000px;text-align:right;top:1218.89px;font-size:33.2px;line-height:33.2px;font-weight:400;color:#1a1a1a;">1.799</div>
<div class="r" style="left:1748.90px;top:1191.50px;width:365.00px;height:87.75px;background:#ffffff;border:2.4px solid #e0e0e0;box-sizing:border-box"></div>
<div class="t" style="left:97.40px;width:2000px;text-align:right;top:1218.89px;font-size:33.2px;line-height:33.2px;font-weight:400;color:#1a1a1a;">2.102</div>
<div class="r" style="left:2119.90px;top:1191.50px;width:365.00px;height:87.75px;background:#f5f5f5;border:2.4px solid #e0e0e0;box-sizing:border-box"></div>
<div class="r" style="left:2137.70px;top:1223.40px;width:15.00px;height:15.00px;background:#2e7d5b;border-radius:50%"></div>
<div class="t" style="left:468.40px;width:2000px;text-align:right;top:1218.89px;font-size:33.2px;line-height:33.2px;font-weight:400;color:#1a1a1a;">-303</div>
<div class="r" style="left:2512.90px;top:1191.50px;width:365.00px;height:87.75px;background:#fafafa;border:2.4px solid #e0e0e0;box-sizing:border-box"></div>
<div class="t" style="left:861.40px;width:2000px;text-align:right;top:1218.89px;font-size:33.2px;line-height:33.2px;font-weight:400;color:#1a1a1a;">6.723</div>
<div class="r" style="left:2883.90px;top:1191.50px;width:365.00px;height:87.75px;background:#ffffff;border:2.4px solid #e0e0e0;box-sizing:border-box"></div>
<div class="t" style="left:1232.40px;width:2000px;text-align:right;top:1218.89px;font-size:33.2px;line-height:33.2px;font-weight:400;color:#1a1a1a;">6.542</div>
<div class="r" style="left:3254.90px;top:1191.50px;width:365.00px;height:87.75px;background:#f5f5f5;border:2.4px solid #e0e0e0;box-sizing:border-box"></div>
<div class="r" style="left:3272.70px;top:1223.40px;width:15.00px;height:15.00px;background:#c0403f;border-radius:50%"></div>
<div class="t" style="left:1603.40px;width:2000px;text-align:right;top:1218.89px;font-size:33.2px;line-height:33.2px;font-weight:400;color:#1a1a1a;">181</div>
<div class="r" style="left:3647.90px;top:1191.50px;width:365.00px;height:87.75px;background:#ffffff;border:2.4px solid #e0e0e0;box-sizing:border-box"></div>
<div class="t" style="left:1996.40px;width:2000px;text-align:right;top:1218.89px;font-size:33.2px;line-height:33.2px;font-weight:400;color:#1a1a1a;">23.133</div>
<div class="r" style="left:4018.90px;top:1191.50px;width:365.00px;height:87.75px;background:#ffffff;border:2.4px solid #e0e0e0;box-sizing:border-box"></div>
<div class="t" style="left:2367.40px;width:2000px;text-align:right;top:1218.89px;font-size:33.2px;line-height:33.2px;font-weight:400;color:#1a1a1a;">22.951</div>
<div class="r" style="left:4389.90px;top:1191.50px;width:365.00px;height:87.75px;background:#f5f5f5;border:2.4px solid #e0e0e0;box-sizing:border-box"></div>
<div class="r" style="left:4407.70px;top:1223.40px;width:15.00px;height:15.00px;background:#c0403f;border-radius:50%"></div>
<div class="t" style="left:2735.40px;width:2000px;text-align:right;top:1218.89px;font-size:33.2px;line-height:33.2px;font-weight:400;color:#1a1a1a;">181</div>
<div class="t" style="left:745.00px;top:1316.39px;font-size:33.2px;line-height:33.2px;font-weight:400;color:#3b6bd0;">Dækningsbidrag</div>
<div class="t" style="left:-652.50px;width:2000px;text-align:right;top:1316.39px;font-size:33.2px;line-height:33.2px;font-weight:400;color:#1a1a1a;">2000</div>
<div class="r" style="left:1377.90px;top:1289.00px;width:365.00px;height:87.75px;background:#dfe9fb;border:2.4px solid #e0e0e0;box-sizing:border-box"></div>
<div class="t" style="left:-273.60px;width:2000px;text-align:right;top:1316.39px;font-size:33.2px;line-height:33.2px;font-weight:400;color:#1a1a1a;">2.622</div>
<div class="r" style="left:1748.90px;top:1289.00px;width:365.00px;height:87.75px;background:#dfe9fb;border:2.4px solid #e0e0e0;box-sizing:border-box"></div>
<div class="t" style="left:97.40px;width:2000px;text-align:right;top:1316.39px;font-size:33.2px;line-height:33.2px;font-weight:400;color:#1a1a1a;">2.256</div>
<div class="r" style="left:2119.90px;top:1289.00px;width:365.00px;height:87.75px;background:#dfe9fb;border:2.4px solid #e0e0e0;box-sizing:border-box"></div>
<div class="r" style="left:2137.70px;top:1320.90px;width:15.00px;height:15.00px;background:#2e7d5b;border-radius:50%"></div>
<div class="t" style="left:468.40px;width:2000px;text-align:right;top:1316.39px;font-size:33.2px;line-height:33.2px;font-weight:400;color:#1a1a1a;">366</div>
<div class="r" style="left:2512.90px;top:1289.00px;width:365.00px;height:87.75px;background:#dfe9fb;border:2.4px solid #e0e0e0;box-sizing:border-box"></div>
<div class="t" style="left:861.40px;width:2000px;text-align:right;top:1316.39px;font-size:33.2px;line-height:33.2px;font-weight:400;color:#1a1a1a;">9.827</div>
<div class="r" style="left:2883.90px;top:1289.00px;width:365.00px;height:87.75px;background:#dfe9fb;border:2.4px solid #e0e0e0;box-sizing:border-box"></div>
<div class="t" style="left:1232.40px;width:2000px;text-align:right;top:1316.39px;font-size:33.2px;line-height:33.2px;font-weight:400;color:#1a1a1a;">5.915</div>
<div class="r" style="left:3254.90px;top:1289.00px;width:365.00px;height:87.75px;background:#dfe9fb;border:2.4px solid #e0e0e0;box-sizing:border-box"></div>
<div class="r" style="left:3272.70px;top:1320.90px;width:15.00px;height:15.00px;background:#2e7d5b;border-radius:50%"></div>
<div class="t" style="left:1603.40px;width:2000px;text-align:right;top:1316.39px;font-size:33.2px;line-height:33.2px;font-weight:400;color:#1a1a1a;">3.912</div>
<div class="r" style="left:3647.90px;top:1289.00px;width:365.00px;height:87.75px;background:#dfe9fb;border:2.4px solid #e0e0e0;box-sizing:border-box"></div>
<div class="t" style="left:1996.40px;width:2000px;text-align:right;top:1316.39px;font-size:33.2px;line-height:33.2px;font-weight:400;color:#1a1a1a;">22.821</div>
<div class="r" style="left:4018.90px;top:1289.00px;width:365.00px;height:87.75px;background:#dfe9fb;border:2.4px solid #e0e0e0;box-sizing:border-box"></div>
<div class="t" style="left:2367.40px;width:2000px;text-align:right;top:1316.39px;font-size:33.2px;line-height:33.2px;font-weight:400;color:#1a1a1a;">18.909</div>
<div class="r" style="left:4389.90px;top:1289.00px;width:365.00px;height:87.75px;background:#dfe9fb;border:2.4px solid #e0e0e0;box-sizing:border-box"></div>
<div class="r" style="left:4407.70px;top:1320.90px;width:15.00px;height:15.00px;background:#2e7d5b;border-radius:50%"></div>
<div class="t" style="left:2735.40px;width:2000px;text-align:right;top:1316.39px;font-size:33.2px;line-height:33.2px;font-weight:400;color:#1a1a1a;">3.912</div>
<div class="t" style="left:745.00px;top:1463.64px;font-size:33.2px;line-height:33.2px;font-weight:400;color:#3b6bd0;">Lønninger i alt</div>
<div class="t" style="left:-652.50px;width:2000px;text-align:right;top:1463.64px;font-size:33.2px;line-height:33.2px;font-weight:400;color:#1a1a1a;">2299</div>
<div class="r" style="left:1377.90px;top:1436.25px;width:365.00px;height:87.75px;background:#fafafa;border:2.4px solid #e0e0e0;box-sizing:border-box"></div>
<div class="t" style="left:-273.60px;width:2000px;text-align:right;top:1463.64px;font-size:33.2px;line-height:33.2px;font-weight:400;color:#1a1a1a;">448</div>
<div class="r" style="left:1748.90px;top:1436.25px;width:365.00px;height:87.75px;background:#ffffff;border:2.4px solid #e0e0e0;box-sizing:border-box"></div>
<div class="t" style="left:97.40px;width:2000px;text-align:right;top:1463.64px;font-size:33.2px;line-height:33.2px;font-weight:400;color:#1a1a1a;">424</div>
<div class="r" style="left:2119.90px;top:1436.25px;width:365.00px;height:87.75px;background:#f5f5f5;border:2.4px solid #e0e0e0;box-sizing:border-box"></div>
<div class="r" style="left:2137.70px;top:1468.15px;width:15.00px;height:15.00px;background:#c0403f;border-radius:50%"></div>
<div class="t" style="left:468.40px;width:2000px;text-align:right;top:1463.64px;font-size:33.2px;line-height:33.2px;font-weight:400;color:#1a1a1a;">24</div>
<div class="r" style="left:2512.90px;top:1436.25px;width:365.00px;height:87.75px;background:#fafafa;border:2.4px solid #e0e0e0;box-sizing:border-box"></div>
<div class="t" style="left:861.40px;width:2000px;text-align:right;top:1463.64px;font-size:33.2px;line-height:33.2px;font-weight:400;color:#1a1a1a;">1.675</div>
<div class="r" style="left:2883.90px;top:1436.25px;width:365.00px;height:87.75px;background:#ffffff;border:2.4px solid #e0e0e0;box-sizing:border-box"></div>
<div class="t" style="left:1232.40px;width:2000px;text-align:right;top:1463.64px;font-size:33.2px;line-height:33.2px;font-weight:400;color:#1a1a1a;">1.232</div>
<div class="r" style="left:3254.90px;top:1436.25px;width:365.00px;height:87.75px;background:#f5f5f5;border:2.4px solid #e0e0e0;box-sizing:border-box"></div>
<div class="r" style="left:3272.70px;top:1468.15px;width:15.00px;height:15.00px;background:#c0403f;border-radius:50%"></div>
<div class="t" style="left:1603.40px;width:2000px;text-align:right;top:1463.64px;font-size:33.2px;line-height:33.2px;font-weight:400;color:#1a1a1a;">444</div>
<div class="r" style="left:3647.90px;top:1436.25px;width:365.00px;height:87.75px;background:#ffffff;border:2.4px solid #e0e0e0;box-sizing:border-box"></div>
<div class="t" style="left:1996.40px;width:2000px;text-align:right;top:1463.64px;font-size:33.2px;line-height:33.2px;font-weight:400;color:#1a1a1a;">3.537</div>
<div class="r" style="left:4018.90px;top:1436.25px;width:365.00px;height:87.75px;background:#ffffff;border:2.4px solid #e0e0e0;box-sizing:border-box"></div>
<div class="t" style="left:2367.40px;width:2000px;text-align:right;top:1463.64px;font-size:33.2px;line-height:33.2px;font-weight:400;color:#1a1a1a;">3.094</div>
<div class="r" style="left:4389.90px;top:1436.25px;width:365.00px;height:87.75px;background:#f5f5f5;border:2.4px solid #e0e0e0;box-sizing:border-box"></div>
<div class="r" style="left:4407.70px;top:1468.15px;width:15.00px;height:15.00px;background:#c0403f;border-radius:50%"></div>
<div class="t" style="left:2735.40px;width:2000px;text-align:right;top:1463.64px;font-size:33.2px;line-height:33.2px;font-weight:400;color:#1a1a1a;">444</div>
<div class="t" style="left:745.00px;top:1558.14px;font-size:33.2px;line-height:33.2px;font-weight:400;color:#3b6bd0;">Salgs- og rejseomkostninger i alt</div>
<div class="t" style="left:-652.50px;width:2000px;text-align:right;top:1558.14px;font-size:33.2px;line-height:33.2px;font-weight:400;color:#1a1a1a;">2899</div>
<div class="r" style="left:1377.90px;top:1530.75px;width:365.00px;height:87.75px;background:#fafafa;border:2.4px solid #e0e0e0;box-sizing:border-box"></div>
<div class="t" style="left:-273.60px;width:2000px;text-align:right;top:1558.14px;font-size:33.2px;line-height:33.2px;font-weight:400;color:#1a1a1a;">271</div>
<div class="r" style="left:1748.90px;top:1530.75px;width:365.00px;height:87.75px;background:#ffffff;border:2.4px solid #e0e0e0;box-sizing:border-box"></div>
<div class="t" style="left:97.40px;width:2000px;text-align:right;top:1558.14px;font-size:33.2px;line-height:33.2px;font-weight:400;color:#1a1a1a;">257</div>
<div class="r" style="left:2119.90px;top:1530.75px;width:365.00px;height:87.75px;background:#f5f5f5;border:2.4px solid #e0e0e0;box-sizing:border-box"></div>
<div class="r" style="left:2137.70px;top:1562.65px;width:15.00px;height:15.00px;background:#c0403f;border-radius:50%"></div>
<div class="t" style="left:468.40px;width:2000px;text-align:right;top:1558.14px;font-size:33.2px;line-height:33.2px;font-weight:400;color:#1a1a1a;">15</div>
<div class="r" style="left:2512.90px;top:1530.75px;width:365.00px;height:87.75px;background:#fafafa;border:2.4px solid #e0e0e0;box-sizing:border-box"></div>
<div class="t" style="left:861.40px;width:2000px;text-align:right;top:1558.14px;font-size:33.2px;line-height:33.2px;font-weight:400;color:#1a1a1a;">1.014</div>
<div class="r" style="left:2883.90px;top:1530.75px;width:365.00px;height:87.75px;background:#ffffff;border:2.4px solid #e0e0e0;box-sizing:border-box"></div>
<div class="t" style="left:1232.40px;width:2000px;text-align:right;top:1558.14px;font-size:33.2px;line-height:33.2px;font-weight:400;color:#1a1a1a;">745</div>
<div class="r" style="left:3254.90px;top:1530.75px;width:365.00px;height:87.75px;background:#f5f5f5;border:2.4px solid #e0e0e0;box-sizing:border-box"></div>
<div class="r" style="left:3272.70px;top:1562.65px;width:15.00px;height:15.00px;background:#c0403f;border-radius:50%"></div>
<div class="t" style="left:1603.40px;width:2000px;text-align:right;top:1558.14px;font-size:33.2px;line-height:33.2px;font-weight:400;color:#1a1a1a;">269</div>
<div class="r" style="left:3647.90px;top:1530.75px;width:365.00px;height:87.75px;background:#ffffff;border:2.4px solid #e0e0e0;box-sizing:border-box"></div>
<div class="t" style="left:1996.40px;width:2000px;text-align:right;top:1558.14px;font-size:33.2px;line-height:33.2px;font-weight:400;color:#1a1a1a;">2.887</div>
<div class="r" style="left:4018.90px;top:1530.75px;width:365.00px;height:87.75px;background:#ffffff;border:2.4px solid #e0e0e0;box-sizing:border-box"></div>
<div class="t" style="left:2367.40px;width:2000px;text-align:right;top:1558.14px;font-size:33.2px;line-height:33.2px;font-weight:400;color:#1a1a1a;">2.618</div>
<div class="r" style="left:4389.90px;top:1530.75px;width:365.00px;height:87.75px;background:#f5f5f5;border:2.4px solid #e0e0e0;box-sizing:border-box"></div>
<div class="r" style="left:4407.70px;top:1562.65px;width:15.00px;height:15.00px;background:#c0403f;border-radius:50%"></div>
<div class="t" style="left:2735.40px;width:2000px;text-align:right;top:1558.14px;font-size:33.2px;line-height:33.2px;font-weight:400;color:#1a1a1a;">269</div>
<div class="t" style="left:745.00px;top:1652.39px;font-size:33.2px;line-height:33.2px;font-weight:400;color:#3b6bd0;">Biler i alt</div>
<div class="t" style="left:-652.50px;width:2000px;text-align:right;top:1652.39px;font-size:33.2px;line-height:33.2px;font-weight:400;color:#1a1a1a;">3149</div>
<div class="r" style="left:1377.90px;top:1625.00px;width:365.00px;height:87.75px;background:#fafafa;border:2.4px solid #e0e0e0;box-sizing:border-box"></div>
<div class="t" style="left:-273.60px;width:2000px;text-align:right;top:1652.39px;font-size:33.2px;line-height:33.2px;font-weight:400;color:#1a1a1a;">45</div>
<div class="r" style="left:1748.90px;top:1625.00px;width:365.00px;height:87.75px;background:#ffffff;border:2.4px solid #e0e0e0;box-sizing:border-box"></div>
<div class="t" style="left:97.40px;width:2000px;text-align:right;top:1652.39px;font-size:33.2px;line-height:33.2px;font-weight:400;color:#1a1a1a;">42</div>
<div class="r" style="left:2119.90px;top:1625.00px;width:365.00px;height:87.75px;background:#f5f5f5;border:2.4px solid #e0e0e0;box-sizing:border-box"></div>
<div class="r" style="left:2137.70px;top:1656.90px;width:15.00px;height:15.00px;background:#c0403f;border-radius:50%"></div>
<div class="t" style="left:468.40px;width:2000px;text-align:right;top:1652.39px;font-size:33.2px;line-height:33.2px;font-weight:400;color:#1a1a1a;">2</div>
<div class="r" style="left:2512.90px;top:1625.00px;width:365.00px;height:87.75px;background:#fafafa;border:2.4px solid #e0e0e0;box-sizing:border-box"></div>
<div class="t" style="left:861.40px;width:2000px;text-align:right;top:1652.39px;font-size:33.2px;line-height:33.2px;font-weight:400;color:#1a1a1a;">167</div>
<div class="r" style="left:2883.90px;top:1625.00px;width:365.00px;height:87.75px;background:#ffffff;border:2.4px solid #e0e0e0;box-sizing:border-box"></div>
<div class="t" style="left:1232.40px;width:2000px;text-align:right;top:1652.39px;font-size:33.2px;line-height:33.2px;font-weight:400;color:#1a1a1a;">123</div>
<div class="r" style="left:3254.90px;top:1625.00px;width:365.00px;height:87.75px;background:#f5f5f5;border:2.4px solid #e0e0e0;box-sizing:border-box"></div>
<div class="r" style="left:3272.70px;top:1656.90px;width:15.00px;height:15.00px;background:#c0403f;border-radius:50%"></div>
<div class="t" style="left:1603.40px;width:2000px;text-align:right;top:1652.39px;font-size:33.2px;line-height:33.2px;font-weight:400;color:#1a1a1a;">44</div>
<div class="r" style="left:3647.90px;top:1625.00px;width:365.00px;height:87.75px;background:#ffffff;border:2.4px solid #e0e0e0;box-sizing:border-box"></div>
<div class="t" style="left:1996.40px;width:2000px;text-align:right;top:1652.39px;font-size:33.2px;line-height:33.2px;font-weight:400;color:#1a1a1a;">427</div>
<div class="r" style="left:4018.90px;top:1625.00px;width:365.00px;height:87.75px;background:#ffffff;border:2.4px solid #e0e0e0;box-sizing:border-box"></div>
<div class="t" style="left:2367.40px;width:2000px;text-align:right;top:1652.39px;font-size:33.2px;line-height:33.2px;font-weight:400;color:#1a1a1a;">382</div>
<div class="r" style="left:4389.90px;top:1625.00px;width:365.00px;height:87.75px;background:#f5f5f5;border:2.4px solid #e0e0e0;box-sizing:border-box"></div>
<div class="r" style="left:4407.70px;top:1656.90px;width:15.00px;height:15.00px;background:#c0403f;border-radius:50%"></div>
<div class="t" style="left:2735.40px;width:2000px;text-align:right;top:1652.39px;font-size:33.2px;line-height:33.2px;font-weight:400;color:#1a1a1a;">44</div>
<div class="t" style="left:745.00px;top:1746.64px;font-size:33.2px;line-height:33.2px;font-weight:400;color:#3b6bd0;">Lokaleomkostninger i alt</div>
<div class="t" style="left:-652.50px;width:2000px;text-align:right;top:1746.64px;font-size:33.2px;line-height:33.2px;font-weight:400;color:#1a1a1a;">3499</div>
<div class="r" style="left:1377.90px;top:1719.25px;width:365.00px;height:87.75px;background:#fafafa;border:2.4px solid #e0e0e0;box-sizing:border-box"></div>
<div class="t" style="left:-273.60px;width:2000px;text-align:right;top:1746.64px;font-size:33.2px;line-height:33.2px;font-weight:400;color:#1a1a1a;">57</div>
<div class="r" style="left:1748.90px;top:1719.25px;width:365.00px;height:87.75px;background:#ffffff;border:2.4px solid #e0e0e0;box-sizing:border-box"></div>
<div class="t" style="left:97.40px;width:2000px;text-align:right;top:1746.64px;font-size:33.2px;line-height:33.2px;font-weight:400;color:#1a1a1a;">54</div>
<div class="r" style="left:2119.90px;top:1719.25px;width:365.00px;height:87.75px;background:#f5f5f5;border:2.4px solid #e0e0e0;box-sizing:border-box"></div>
<div class="r" style="left:2137.70px;top:1751.15px;width:15.00px;height:15.00px;background:#c0403f;border-radius:50%"></div>
<div class="t" style="left:468.40px;width:2000px;text-align:right;top:1746.64px;font-size:33.2px;line-height:33.2px;font-weight:400;color:#1a1a1a;">3</div>
<div class="r" style="left:2512.90px;top:1719.25px;width:365.00px;height:87.75px;background:#fafafa;border:2.4px solid #e0e0e0;box-sizing:border-box"></div>
<div class="t" style="left:861.40px;width:2000px;text-align:right;top:1746.64px;font-size:33.2px;line-height:33.2px;font-weight:400;color:#1a1a1a;">213</div>
<div class="r" style="left:2883.90px;top:1719.25px;width:365.00px;height:87.75px;background:#ffffff;border:2.4px solid #e0e0e0;box-sizing:border-box"></div>
<div class="t" style="left:1232.40px;width:2000px;text-align:right;top:1746.64px;font-size:33.2px;line-height:33.2px;font-weight:400;color:#1a1a1a;">157</div>
<div class="r" style="left:3254.90px;top:1719.25px;width:365.00px;height:87.75px;background:#f5f5f5;border:2.4px solid #e0e0e0;box-sizing:border-box"></div>
<div class="r" style="left:3272.70px;top:1751.15px;width:15.00px;height:15.00px;background:#c0403f;border-radius:50%"></div>
<div class="t" style="left:1603.40px;width:2000px;text-align:right;top:1746.64px;font-size:33.2px;line-height:33.2px;font-weight:400;color:#1a1a1a;">56</div>
<div class="r" style="left:3647.90px;top:1719.25px;width:365.00px;height:87.75px;background:#ffffff;border:2.4px solid #e0e0e0;box-sizing:border-box"></div>
<div class="t" style="left:1996.40px;width:2000px;text-align:right;top:1746.64px;font-size:33.2px;line-height:33.2px;font-weight:400;color:#1a1a1a;">632</div>
<div class="r" style="left:4018.90px;top:1719.25px;width:365.00px;height:87.75px;background:#ffffff;border:2.4px solid #e0e0e0;box-sizing:border-box"></div>
<div class="t" style="left:2367.40px;width:2000px;text-align:right;top:1746.64px;font-size:33.2px;line-height:33.2px;font-weight:400;color:#1a1a1a;">575</div>
<div class="r" style="left:4389.90px;top:1719.25px;width:365.00px;height:87.75px;background:#f5f5f5;border:2.4px solid #e0e0e0;box-sizing:border-box"></div>
<div class="r" style="left:4407.70px;top:1751.15px;width:15.00px;height:15.00px;background:#c0403f;border-radius:50%"></div>
<div class="t" style="left:2735.40px;width:2000px;text-align:right;top:1746.64px;font-size:33.2px;line-height:33.2px;font-weight:400;color:#1a1a1a;">56</div>
<div class="t" style="left:745.00px;top:1841.14px;font-size:33.2px;line-height:33.2px;font-weight:400;color:#3b6bd0;">Administrationsomkostninger i alt</div>
<div class="t" style="left:-652.50px;width:2000px;text-align:right;top:1841.14px;font-size:33.2px;line-height:33.2px;font-weight:400;color:#1a1a1a;">3799</div>
<div class="r" style="left:1377.90px;top:1813.75px;width:365.00px;height:87.75px;background:#fafafa;border:2.4px solid #e0e0e0;box-sizing:border-box"></div>
<div class="t" style="left:-273.60px;width:2000px;text-align:right;top:1841.14px;font-size:33.2px;line-height:33.2px;font-weight:400;color:#1a1a1a;">114</div>
<div class="r" style="left:1748.90px;top:1813.75px;width:365.00px;height:87.75px;background:#ffffff;border:2.4px solid #e0e0e0;box-sizing:border-box"></div>
<div class="t" style="left:97.40px;width:2000px;text-align:right;top:1841.14px;font-size:33.2px;line-height:33.2px;font-weight:400;color:#1a1a1a;">112</div>
<div class="r" style="left:2119.90px;top:1813.75px;width:365.00px;height:87.75px;background:#f5f5f5;border:2.4px solid #e0e0e0;box-sizing:border-box"></div>
<div class="r" style="left:2137.70px;top:1845.65px;width:15.00px;height:15.00px;background:#c0403f;border-radius:50%"></div>
<div class="t" style="left:468.40px;width:2000px;text-align:right;top:1841.14px;font-size:33.2px;line-height:33.2px;font-weight:400;color:#1a1a1a;">2</div>
<div class="r" style="left:2512.90px;top:1813.75px;width:365.00px;height:87.75px;background:#fafafa;border:2.4px solid #e0e0e0;box-sizing:border-box"></div>
<div class="t" style="left:861.40px;width:2000px;text-align:right;top:1841.14px;font-size:33.2px;line-height:33.2px;font-weight:400;color:#1a1a1a;">449</div>
<div class="r" style="left:2883.90px;top:1813.75px;width:365.00px;height:87.75px;background:#ffffff;border:2.4px solid #e0e0e0;box-sizing:border-box"></div>
<div class="t" style="left:1232.40px;width:2000px;text-align:right;top:1841.14px;font-size:33.2px;line-height:33.2px;font-weight:400;color:#1a1a1a;">420</div>
<div class="r" style="left:3254.90px;top:1813.75px;width:365.00px;height:87.75px;background:#f5f5f5;border:2.4px solid #e0e0e0;box-sizing:border-box"></div>
<div class="r" style="left:3272.70px;top:1845.65px;width:15.00px;height:15.00px;background:#c0403f;border-radius:50%"></div>
<div class="t" style="left:1603.40px;width:2000px;text-align:right;top:1841.14px;font-size:33.2px;line-height:33.2px;font-weight:400;color:#1a1a1a;">28</div>
<div class="r" style="left:3647.90px;top:1813.75px;width:365.00px;height:87.75px;background:#ffffff;border:2.4px solid #e0e0e0;box-sizing:border-box"></div>
<div class="t" style="left:1996.40px;width:2000px;text-align:right;top:1841.14px;font-size:33.2px;line-height:33.2px;font-weight:400;color:#1a1a1a;">1.342</div>
<div class="r" style="left:4018.90px;top:1813.75px;width:365.00px;height:87.75px;background:#ffffff;border:2.4px solid #e0e0e0;box-sizing:border-box"></div>
<div class="t" style="left:2367.40px;width:2000px;text-align:right;top:1841.14px;font-size:33.2px;line-height:33.2px;font-weight:400;color:#1a1a1a;">1.314</div>
<div class="r" style="left:4389.90px;top:1813.75px;width:365.00px;height:87.75px;background:#f5f5f5;border:2.4px solid #e0e0e0;box-sizing:border-box"></div>
<div class="r" style="left:4407.70px;top:1845.65px;width:15.00px;height:15.00px;background:#c0403f;border-radius:50%"></div>
<div class="t" style="left:2735.40px;width:2000px;text-align:right;top:1841.14px;font-size:33.2px;line-height:33.2px;font-weight:400;color:#1a1a1a;">28</div>
<div class="t" style="left:745.00px;top:1938.64px;font-size:33.2px;line-height:33.2px;font-weight:400;color:#3b6bd0;">Resultat før afskrivninger</div>
<div class="t" style="left:-652.50px;width:2000px;text-align:right;top:1938.64px;font-size:33.2px;line-height:33.2px;font-weight:400;color:#1a1a1a;">3800</div>
<div class="r" style="left:1377.90px;top:1911.25px;width:365.00px;height:87.75px;background:#dfe9fb;border:2.4px solid #e0e0e0;box-sizing:border-box"></div>
<div class="t" style="left:-273.60px;width:2000px;text-align:right;top:1938.64px;font-size:33.2px;line-height:33.2px;font-weight:400;color:#1a1a1a;">1.687</div>
<div class="r" style="left:1748.90px;top:1911.25px;width:365.00px;height:87.75px;background:#dfe9fb;border:2.4px solid #e0e0e0;box-sizing:border-box"></div>
<div class="t" style="left:97.40px;width:2000px;text-align:right;top:1938.64px;font-size:33.2px;line-height:33.2px;font-weight:400;color:#1a1a1a;">1.367</div>
<div class="r" style="left:2119.90px;top:1911.25px;width:365.00px;height:87.75px;background:#dfe9fb;border:2.4px solid #e0e0e0;box-sizing:border-box"></div>
<div class="r" style="left:2137.70px;top:1943.15px;width:15.00px;height:15.00px;background:#2e7d5b;border-radius:50%"></div>
<div class="t" style="left:468.40px;width:2000px;text-align:right;top:1938.64px;font-size:33.2px;line-height:33.2px;font-weight:400;color:#1a1a1a;">320</div>
<div class="r" style="left:2512.90px;top:1911.25px;width:365.00px;height:87.75px;background:#dfe9fb;border:2.4px solid #e0e0e0;box-sizing:border-box"></div>
<div class="t" style="left:861.40px;width:2000px;text-align:right;top:1938.64px;font-size:33.2px;line-height:33.2px;font-weight:400;color:#1a1a1a;">6.309</div>
<div class="r" style="left:2883.90px;top:1911.25px;width:365.00px;height:87.75px;background:#dfe9fb;border:2.4px solid #e0e0e0;box-sizing:border-box"></div>
<div class="t" style="left:1232.40px;width:2000px;text-align:right;top:1938.64px;font-size:33.2px;line-height:33.2px;font-weight:400;color:#1a1a1a;">3.238</div>
<div class="r" style="left:3254.90px;top:1911.25px;width:365.00px;height:87.75px;background:#dfe9fb;border:2.4px solid #e0e0e0;box-sizing:border-box"></div>
<div class="r" style="left:3272.70px;top:1943.15px;width:15.00px;height:15.00px;background:#2e7d5b;border-radius:50%"></div>
<div class="t" style="left:1603.40px;width:2000px;text-align:right;top:1938.64px;font-size:33.2px;line-height:33.2px;font-weight:400;color:#1a1a1a;">3.071</div>
<div class="r" style="left:3647.90px;top:1911.25px;width:365.00px;height:87.75px;background:#dfe9fb;border:2.4px solid #e0e0e0;box-sizing:border-box"></div>
<div class="t" style="left:1996.40px;width:2000px;text-align:right;top:1938.64px;font-size:33.2px;line-height:33.2px;font-weight:400;color:#1a1a1a;">13.997</div>
<div class="r" style="left:4018.90px;top:1911.25px;width:365.00px;height:87.75px;background:#dfe9fb;border:2.4px solid #e0e0e0;box-sizing:border-box"></div>
<div class="t" style="left:2367.40px;width:2000px;text-align:right;top:1938.64px;font-size:33.2px;line-height:33.2px;font-weight:400;color:#1a1a1a;">10.926</div>
<div class="r" style="left:4389.90px;top:1911.25px;width:365.00px;height:87.75px;background:#dfe9fb;border:2.4px solid #e0e0e0;box-sizing:border-box"></div>
<div class="r" style="left:4407.70px;top:1943.15px;width:15.00px;height:15.00px;background:#2e7d5b;border-radius:50%"></div>
<div class="t" style="left:2735.40px;width:2000px;text-align:right;top:1938.64px;font-size:33.2px;line-height:33.2px;font-weight:400;color:#1a1a1a;">3.071</div>
<div class="t" style="left:745.00px;top:2085.39px;font-size:33.2px;line-height:33.2px;font-weight:400;color:#3b6bd0;">Afskrivninger i alt</div>
<div class="t" style="left:-652.50px;width:2000px;text-align:right;top:2085.39px;font-size:33.2px;line-height:33.2px;font-weight:400;color:#1a1a1a;">3999</div>
<div class="r" style="left:1377.90px;top:2058.00px;width:365.00px;height:87.75px;background:#fafafa;border:2.4px solid #e0e0e0;box-sizing:border-box"></div>
<div class="t" style="left:-273.60px;width:2000px;text-align:right;top:2085.39px;font-size:33.2px;line-height:33.2px;font-weight:400;color:#1a1a1a;">15</div>
<div class="r" style="left:1748.90px;top:2058.00px;width:365.00px;height:87.75px;background:#ffffff;border:2.4px solid #e0e0e0;box-sizing:border-box"></div>
<div class="t" style="left:97.40px;width:2000px;text-align:right;top:2085.39px;font-size:33.2px;line-height:33.2px;font-weight:400;color:#1a1a1a;">15</div>
<div class="r" style="left:2119.90px;top:2058.00px;width:365.00px;height:87.75px;background:#f5f5f5;border:2.4px solid #e0e0e0;box-sizing:border-box"></div>
<div class="r" style="left:2137.70px;top:2089.90px;width:15.00px;height:15.00px;background:#2e7d5b;border-radius:50%"></div>
<div class="t" style="left:468.40px;width:2000px;text-align:right;top:2085.39px;font-size:33.2px;line-height:33.2px;font-weight:400;color:#1a1a1a;">0</div>
<div class="r" style="left:2512.90px;top:2058.00px;width:365.00px;height:87.75px;background:#fafafa;border:2.4px solid #e0e0e0;box-sizing:border-box"></div>
<div class="t" style="left:861.40px;width:2000px;text-align:right;top:2085.39px;font-size:33.2px;line-height:33.2px;font-weight:400;color:#1a1a1a;">60</div>
<div class="r" style="left:2883.90px;top:2058.00px;width:365.00px;height:87.75px;background:#ffffff;border:2.4px solid #e0e0e0;box-sizing:border-box"></div>
<div class="t" style="left:1232.40px;width:2000px;text-align:right;top:2085.39px;font-size:33.2px;line-height:33.2px;font-weight:400;color:#1a1a1a;">60</div>
<div class="r" style="left:3254.90px;top:2058.00px;width:365.00px;height:87.75px;background:#f5f5f5;border:2.4px solid #e0e0e0;box-sizing:border-box"></div>
<div class="r" style="left:3272.70px;top:2089.90px;width:15.00px;height:15.00px;background:#2e7d5b;border-radius:50%"></div>
<div class="t" style="left:1603.40px;width:2000px;text-align:right;top:2085.39px;font-size:33.2px;line-height:33.2px;font-weight:400;color:#1a1a1a;">0</div>
<div class="r" style="left:3647.90px;top:2058.00px;width:365.00px;height:87.75px;background:#ffffff;border:2.4px solid #e0e0e0;box-sizing:border-box"></div>
<div class="t" style="left:1996.40px;width:2000px;text-align:right;top:2085.39px;font-size:33.2px;line-height:33.2px;font-weight:400;color:#1a1a1a;">180</div>
<div class="r" style="left:4018.90px;top:2058.00px;width:365.00px;height:87.75px;background:#ffffff;border:2.4px solid #e0e0e0;box-sizing:border-box"></div>
<div class="t" style="left:2367.40px;width:2000px;text-align:right;top:2085.39px;font-size:33.2px;line-height:33.2px;font-weight:400;color:#1a1a1a;">180</div>
<div class="r" style="left:4389.90px;top:2058.00px;width:365.00px;height:87.75px;background:#f5f5f5;border:2.4px solid #e0e0e0;box-sizing:border-box"></div>
<div class="r" style="left:4407.70px;top:2089.90px;width:15.00px;height:15.00px;background:#2e7d5b;border-radius:50%"></div>
<div class="t" style="left:2735.40px;width:2000px;text-align:right;top:2085.39px;font-size:33.2px;line-height:33.2px;font-weight:400;color:#1a1a1a;">0</div>
<div class="t" style="left:745.00px;top:2182.89px;font-size:33.2px;line-height:33.2px;font-weight:400;color:#3b6bd0;">Resultat før renter</div>
<div class="t" style="left:-652.50px;width:2000px;text-align:right;top:2182.89px;font-size:33.2px;line-height:33.2px;font-weight:400;color:#1a1a1a;">4000</div>
<div class="r" style="left:1377.90px;top:2155.50px;width:365.00px;height:87.75px;background:#dfe9fb;border:2.4px solid #e0e0e0;box-sizing:border-box"></div>
<div class="t" style="left:-273.60px;width:2000px;text-align:right;top:2182.89px;font-size:33.2px;line-height:33.2px;font-weight:400;color:#1a1a1a;">1.672</div>
<div class="r" style="left:1748.90px;top:2155.50px;width:365.00px;height:87.75px;background:#dfe9fb;border:2.4px solid #e0e0e0;box-sizing:border-box"></div>
<div class="t" style="left:97.40px;width:2000px;text-align:right;top:2182.89px;font-size:33.2px;line-height:33.2px;font-weight:400;color:#1a1a1a;">1.352</div>
<div class="r" style="left:2119.90px;top:2155.50px;width:365.00px;height:87.75px;background:#dfe9fb;border:2.4px solid #e0e0e0;box-sizing:border-box"></div>
<div class="r" style="left:2137.70px;top:2187.40px;width:15.00px;height:15.00px;background:#2e7d5b;border-radius:50%"></div>
<div class="t" style="left:468.40px;width:2000px;text-align:right;top:2182.89px;font-size:33.2px;line-height:33.2px;font-weight:400;color:#1a1a1a;">320</div>
<div class="r" style="left:2512.90px;top:2155.50px;width:365.00px;height:87.75px;background:#dfe9fb;border:2.4px solid #e0e0e0;box-sizing:border-box"></div>
<div class="t" style="left:861.40px;width:2000px;text-align:right;top:2182.89px;font-size:33.2px;line-height:33.2px;font-weight:400;color:#1a1a1a;">6.249</div>
<div class="r" style="left:2883.90px;top:2155.50px;width:365.00px;height:87.75px;background:#dfe9fb;border:2.4px solid #e0e0e0;box-sizing:border-box"></div>
<div class="t" style="left:1232.40px;width:2000px;text-align:right;top:2182.89px;font-size:33.2px;line-height:33.2px;font-weight:400;color:#1a1a1a;">3.178</div>
<div class="r" style="left:3254.90px;top:2155.50px;width:365.00px;height:87.75px;background:#dfe9fb;border:2.4px solid #e0e0e0;box-sizing:border-box"></div>
<div class="r" style="left:3272.70px;top:2187.40px;width:15.00px;height:15.00px;background:#2e7d5b;border-radius:50%"></div>
<div class="t" style="left:1603.40px;width:2000px;text-align:right;top:2182.89px;font-size:33.2px;line-height:33.2px;font-weight:400;color:#1a1a1a;">3.071</div>
<div class="r" style="left:3647.90px;top:2155.50px;width:365.00px;height:87.75px;background:#dfe9fb;border:2.4px solid #e0e0e0;box-sizing:border-box"></div>
<div class="t" style="left:1996.40px;width:2000px;text-align:right;top:2182.89px;font-size:33.2px;line-height:33.2px;font-weight:400;color:#1a1a1a;">13.817</div>
<div class="r" style="left:4018.90px;top:2155.50px;width:365.00px;height:87.75px;background:#dfe9fb;border:2.4px solid #e0e0e0;box-sizing:border-box"></div>
<div class="t" style="left:2367.40px;width:2000px;text-align:right;top:2182.89px;font-size:33.2px;line-height:33.2px;font-weight:400;color:#1a1a1a;">10.746</div>
<div class="r" style="left:4389.90px;top:2155.50px;width:365.00px;height:87.75px;background:#dfe9fb;border:2.4px solid #e0e0e0;box-sizing:border-box"></div>
<div class="r" style="left:4407.70px;top:2187.40px;width:15.00px;height:15.00px;background:#2e7d5b;border-radius:50%"></div>
<div class="t" style="left:2735.40px;width:2000px;text-align:right;top:2182.89px;font-size:33.2px;line-height:33.2px;font-weight:400;color:#1a1a1a;">3.071</div>
<div class="t" style="left:745.00px;top:2329.89px;font-size:33.2px;line-height:33.2px;font-weight:400;color:#3b6bd0;">Renteudgifter i alt</div>
<div class="t" style="left:-652.50px;width:2000px;text-align:right;top:2329.89px;font-size:33.2px;line-height:33.2px;font-weight:400;color:#1a1a1a;">4499</div>
<div class="r" style="left:1377.90px;top:2302.50px;width:365.00px;height:87.75px;background:#fafafa;border:2.4px solid #e0e0e0;box-sizing:border-box"></div>
<div class="t" style="left:-273.60px;width:2000px;text-align:right;top:2329.89px;font-size:33.2px;line-height:33.2px;font-weight:400;color:#1a1a1a;">3</div>
<div class="r" style="left:1748.90px;top:2302.50px;width:365.00px;height:87.75px;background:#ffffff;border:2.4px solid #e0e0e0;box-sizing:border-box"></div>
<div class="t" style="left:97.40px;width:2000px;text-align:right;top:2329.89px;font-size:33.2px;line-height:33.2px;font-weight:400;color:#1a1a1a;">3</div>
<div class="r" style="left:2119.90px;top:2302.50px;width:365.00px;height:87.75px;background:#f5f5f5;border:2.4px solid #e0e0e0;box-sizing:border-box"></div>
<div class="r" style="left:2137.70px;top:2334.40px;width:15.00px;height:15.00px;background:#c0403f;border-radius:50%"></div>
<div class="t" style="left:468.40px;width:2000px;text-align:right;top:2329.89px;font-size:33.2px;line-height:33.2px;font-weight:400;color:#1a1a1a;">0</div>
<div class="r" style="left:2512.90px;top:2302.50px;width:365.00px;height:87.75px;background:#fafafa;border:2.4px solid #e0e0e0;box-sizing:border-box"></div>
<div class="t" style="left:861.40px;width:2000px;text-align:right;top:2329.89px;font-size:33.2px;line-height:33.2px;font-weight:400;color:#1a1a1a;">11</div>
<div class="r" style="left:2883.90px;top:2302.50px;width:365.00px;height:87.75px;background:#ffffff;border:2.4px solid #e0e0e0;box-sizing:border-box"></div>
<div class="t" style="left:1232.40px;width:2000px;text-align:right;top:2329.89px;font-size:33.2px;line-height:33.2px;font-weight:400;color:#1a1a1a;">8</div>
<div class="r" style="left:3254.90px;top:2302.50px;width:365.00px;height:87.75px;background:#f5f5f5;border:2.4px solid #e0e0e0;box-sizing:border-box"></div>
<div class="r" style="left:3272.70px;top:2334.40px;width:15.00px;height:15.00px;background:#c0403f;border-radius:50%"></div>
<div class="t" style="left:1603.40px;width:2000px;text-align:right;top:2329.89px;font-size:33.2px;line-height:33.2px;font-weight:400;color:#1a1a1a;">3</div>
<div class="r" style="left:3647.90px;top:2302.50px;width:365.00px;height:87.75px;background:#ffffff;border:2.4px solid #e0e0e0;box-sizing:border-box"></div>
<div class="t" style="left:1996.40px;width:2000px;text-align:right;top:2329.89px;font-size:33.2px;line-height:33.2px;font-weight:400;color:#1a1a1a;">24</div>
<div class="r" style="left:4018.90px;top:2302.50px;width:365.00px;height:87.75px;background:#ffffff;border:2.4px solid #e0e0e0;box-sizing:border-box"></div>
<div class="t" style="left:2367.40px;width:2000px;text-align:right;top:2329.89px;font-size:33.2px;line-height:33.2px;font-weight:400;color:#1a1a1a;">21</div>
<div class="r" style="left:4389.90px;top:2302.50px;width:365.00px;height:87.75px;background:#f5f5f5;border:2.4px solid #e0e0e0;box-sizing:border-box"></div>
<div class="r" style="left:4407.70px;top:2334.40px;width:15.00px;height:15.00px;background:#c0403f;border-radius:50%"></div>
<div class="t" style="left:2735.40px;width:2000px;text-align:right;top:2329.89px;font-size:33.2px;line-height:33.2px;font-weight:400;color:#1a1a1a;">3</div>
<div class="t" style="left:745.00px;top:2427.39px;font-size:33.2px;line-height:33.2px;font-weight:400;color:#3b6bd0;">Resultat før skat</div>
<div class="t" style="left:-652.50px;width:2000px;text-align:right;top:2427.39px;font-size:33.2px;line-height:33.2px;font-weight:400;color:#1a1a1a;">4700</div>
<div class="r" style="left:1377.90px;top:2400.00px;width:365.00px;height:87.75px;background:#dfe9fb;border:2.4px solid #e0e0e0;box-sizing:border-box"></div>
<div class="t" style="left:-273.60px;width:2000px;text-align:right;top:2427.39px;font-size:33.2px;line-height:33.2px;font-weight:400;color:#1a1a1a;">1.669</div>
<div class="r" style="left:1748.90px;top:2400.00px;width:365.00px;height:87.75px;background:#dfe9fb;border:2.4px solid #e0e0e0;box-sizing:border-box"></div>
<div class="t" style="left:97.40px;width:2000px;text-align:right;top:2427.39px;font-size:33.2px;line-height:33.2px;font-weight:400;color:#1a1a1a;">1.349</div>
<div class="r" style="left:2119.90px;top:2400.00px;width:365.00px;height:87.75px;background:#dfe9fb;border:2.4px solid #e0e0e0;box-sizing:border-box"></div>
<div class="r" style="left:2137.70px;top:2431.90px;width:15.00px;height:15.00px;background:#2e7d5b;border-radius:50%"></div>
<div class="t" style="left:468.40px;width:2000px;text-align:right;top:2427.39px;font-size:33.2px;line-height:33.2px;font-weight:400;color:#1a1a1a;">320</div>
<div class="r" style="left:2512.90px;top:2400.00px;width:365.00px;height:87.75px;background:#dfe9fb;border:2.4px solid #e0e0e0;box-sizing:border-box"></div>
<div class="t" style="left:861.40px;width:2000px;text-align:right;top:2427.39px;font-size:33.2px;line-height:33.2px;font-weight:400;color:#1a1a1a;">6.238</div>
<div class="r" style="left:2883.90px;top:2400.00px;width:365.00px;height:87.75px;background:#dfe9fb;border:2.4px solid #e0e0e0;box-sizing:border-box"></div>
<div class="t" style="left:1232.40px;width:2000px;text-align:right;top:2427.39px;font-size:33.2px;line-height:33.2px;font-weight:400;color:#1a1a1a;">3.170</div>
<div class="r" style="left:3254.90px;top:2400.00px;width:365.00px;height:87.75px;background:#dfe9fb;border:2.4px solid #e0e0e0;box-sizing:border-box"></div>
<div class="r" style="left:3272.70px;top:2431.90px;width:15.00px;height:15.00px;background:#2e7d5b;border-radius:50%"></div>
<div class="t" style="left:1603.40px;width:2000px;text-align:right;top:2427.39px;font-size:33.2px;line-height:33.2px;font-weight:400;color:#1a1a1a;">3.068</div>
<div class="r" style="left:3647.90px;top:2400.00px;width:365.00px;height:87.75px;background:#dfe9fb;border:2.4px solid #e0e0e0;box-sizing:border-box"></div>
<div class="t" style="left:1996.40px;width:2000px;text-align:right;top:2427.39px;font-size:33.2px;line-height:33.2px;font-weight:400;color:#1a1a1a;">13.793</div>
<div class="r" style="left:4018.90px;top:2400.00px;width:365.00px;height:87.75px;background:#dfe9fb;border:2.4px solid #e0e0e0;box-sizing:border-box"></div>
<div class="t" style="left:2367.40px;width:2000px;text-align:right;top:2427.39px;font-size:33.2px;line-height:33.2px;font-weight:400;color:#1a1a1a;">10.725</div>
<div class="r" style="left:4389.90px;top:2400.00px;width:365.00px;height:87.75px;background:#dfe9fb;border:2.4px solid #e0e0e0;box-sizing:border-box"></div>
<div class="r" style="left:4407.70px;top:2431.90px;width:15.00px;height:15.00px;background:#2e7d5b;border-radius:50%"></div>
<div class="t" style="left:2735.40px;width:2000px;text-align:right;top:2427.39px;font-size:33.2px;line-height:33.2px;font-weight:400;color:#1a1a1a;">3.068</div>
<div class="t" style="left:745.00px;top:2577.14px;font-size:33.2px;line-height:33.2px;font-weight:400;color:#3b6bd0;">RESULTAT EFTER SKAT</div>
<div class="t" style="left:-652.50px;width:2000px;text-align:right;top:2577.14px;font-size:33.2px;line-height:33.2px;font-weight:400;color:#1a1a1a;">4990</div>
<div class="r" style="left:1377.90px;top:2549.75px;width:365.00px;height:87.75px;background:#dfe9fb;border:2.4px solid #e0e0e0;box-sizing:border-box"></div>
<div class="t" style="left:-273.60px;width:2000px;text-align:right;top:2577.14px;font-size:33.2px;line-height:33.2px;font-weight:400;color:#1a1a1a;">1.669</div>
<div class="r" style="left:1748.90px;top:2549.75px;width:365.00px;height:87.75px;background:#dfe9fb;border:2.4px solid #e0e0e0;box-sizing:border-box"></div>
<div class="t" style="left:97.40px;width:2000px;text-align:right;top:2577.14px;font-size:33.2px;line-height:33.2px;font-weight:400;color:#1a1a1a;">1.349</div>
<div class="r" style="left:2119.90px;top:2549.75px;width:365.00px;height:87.75px;background:#dfe9fb;border:2.4px solid #e0e0e0;box-sizing:border-box"></div>
<div class="r" style="left:2137.70px;top:2581.65px;width:15.00px;height:15.00px;background:#2e7d5b;border-radius:50%"></div>
<div class="t" style="left:468.40px;width:2000px;text-align:right;top:2577.14px;font-size:33.2px;line-height:33.2px;font-weight:400;color:#1a1a1a;">320</div>
<div class="r" style="left:2512.90px;top:2549.75px;width:365.00px;height:87.75px;background:#dfe9fb;border:2.4px solid #e0e0e0;box-sizing:border-box"></div>
<div class="t" style="left:861.40px;width:2000px;text-align:right;top:2577.14px;font-size:33.2px;line-height:33.2px;font-weight:400;color:#1a1a1a;">6.238</div>
<div class="r" style="left:2883.90px;top:2549.75px;width:365.00px;height:87.75px;background:#dfe9fb;border:2.4px solid #e0e0e0;box-sizing:border-box"></div>
<div class="t" style="left:1232.40px;width:2000px;text-align:right;top:2577.14px;font-size:33.2px;line-height:33.2px;font-weight:400;color:#1a1a1a;">3.170</div>
<div class="r" style="left:3254.90px;top:2549.75px;width:365.00px;height:87.75px;background:#dfe9fb;border:2.4px solid #e0e0e0;box-sizing:border-box"></div>
<div class="r" style="left:3272.70px;top:2581.65px;width:15.00px;height:15.00px;background:#2e7d5b;border-radius:50%"></div>
<div class="t" style="left:1603.40px;width:2000px;text-align:right;top:2577.14px;font-size:33.2px;line-height:33.2px;font-weight:400;color:#1a1a1a;">3.068</div>
<div class="r" style="left:3647.90px;top:2549.75px;width:365.00px;height:87.75px;background:#dfe9fb;border:2.4px solid #e0e0e0;box-sizing:border-box"></div>
<div class="t" style="left:1996.40px;width:2000px;text-align:right;top:2577.14px;font-size:33.2px;line-height:33.2px;font-weight:400;color:#1a1a1a;">13.793</div>
<div class="r" style="left:4018.90px;top:2549.75px;width:365.00px;height:87.75px;background:#dfe9fb;border:2.4px solid #e0e0e0;box-sizing:border-box"></div>
<div class="t" style="left:2367.40px;width:2000px;text-align:right;top:2577.14px;font-size:33.2px;line-height:33.2px;font-weight:400;color:#1a1a1a;">10.725</div>
<div class="r" style="left:4389.90px;top:2549.75px;width:365.00px;height:87.75px;background:#dfe9fb;border:2.4px solid #e0e0e0;box-sizing:border-box"></div>
<div class="r" style="left:4407.70px;top:2581.65px;width:15.00px;height:15.00px;background:#2e7d5b;border-radius:50%"></div>
<div class="t" style="left:2735.40px;width:2000px;text-align:right;top:2577.14px;font-size:33.2px;line-height:33.2px;font-weight:400;color:#1a1a1a;">3.068</div>
</div></body></html>
